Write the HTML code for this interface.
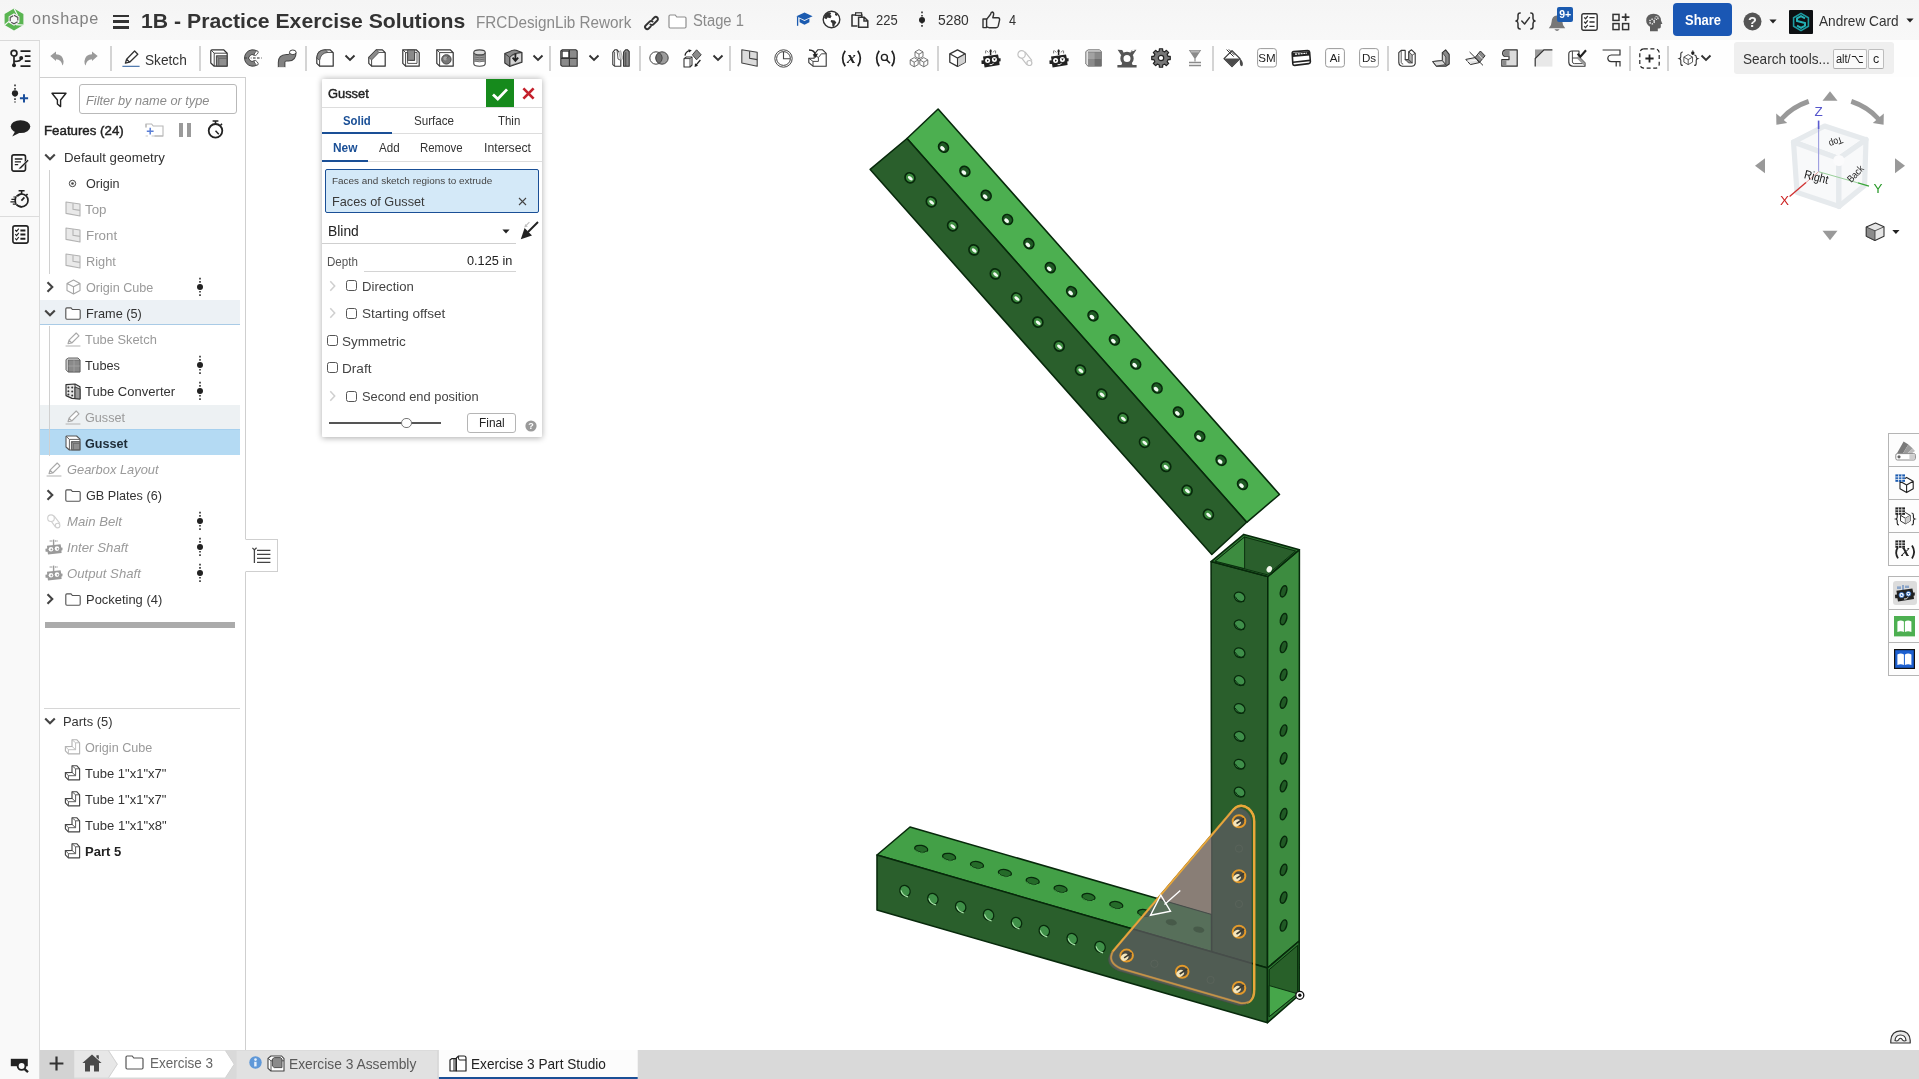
<!DOCTYPE html><html><head><meta charset="utf-8"><title>1B - Practice Exercise Solutions | Exercise 3 Part Studio</title><style>
html,body{margin:0;padding:0}
body{width:1919px;height:1079px;overflow:hidden;background:#fff;font-family:"Liberation Sans", sans-serif;position:relative}
.abs{position:absolute;box-sizing:border-box}
.t{position:absolute;white-space:nowrap;transform-origin:0 0;display:block}
svg{position:absolute;overflow:visible}
.sep{position:absolute;width:2px;background:#d4d4d4;top:46px;height:25px}
.cb{position:absolute;box-sizing:border-box;width:11px;height:11px;border:1px solid #555;border-radius:2.5px;background:#fff}
</style></head><body><div id="app" style="position:absolute;left:0;top:0;width:1919px;height:1079px;will-change:transform">
<svg style="left:0;top:0" width="1919" height="1079" viewBox="0 0 1919 1079"><polygon points="938.1,109.0 1279.5,494.5 1246.7,522.3 907.0,138.5" fill="#4caf50" stroke="#07290b" stroke-width="1.55" stroke-linejoin="round" />
<polygon points="907.0,138.5 1246.7,522.3 1211.8,554.5 870.2,169.4" fill="#2a5f2c" stroke="#07290b" stroke-width="1.55" stroke-linejoin="round" />
<ellipse cx="943.5" cy="147.2" rx="5.3" ry="4.6" transform="rotate(48 943.5 147.2)" fill="#1f5a24" stroke="#07290b" stroke-width="1.7"/>
<ellipse cx="942.5" cy="148.4" rx="2.7" ry="1.8" transform="rotate(40 942.5 148.4)" fill="#f4fbf4" stroke="none" stroke-width="0"/>
<ellipse cx="964.9" cy="171.3" rx="5.3" ry="4.6" transform="rotate(48 964.9 171.3)" fill="#1f5a24" stroke="#07290b" stroke-width="1.7"/>
<ellipse cx="963.9" cy="172.5" rx="2.7" ry="1.8" transform="rotate(40 963.9 172.5)" fill="#f4fbf4" stroke="none" stroke-width="0"/>
<ellipse cx="986.2" cy="195.4" rx="5.3" ry="4.6" transform="rotate(48 986.2 195.4)" fill="#1f5a24" stroke="#07290b" stroke-width="1.7"/>
<ellipse cx="985.2" cy="196.6" rx="2.7" ry="1.8" transform="rotate(40 985.2 196.6)" fill="#f4fbf4" stroke="none" stroke-width="0"/>
<ellipse cx="1007.6" cy="219.5" rx="5.3" ry="4.6" transform="rotate(48 1007.6 219.5)" fill="#1f5a24" stroke="#07290b" stroke-width="1.7"/>
<ellipse cx="1006.6" cy="220.7" rx="2.7" ry="1.8" transform="rotate(40 1006.6 220.7)" fill="#f4fbf4" stroke="none" stroke-width="0"/>
<ellipse cx="1028.9" cy="243.6" rx="5.3" ry="4.6" transform="rotate(48 1028.9 243.6)" fill="#1f5a24" stroke="#07290b" stroke-width="1.7"/>
<ellipse cx="1027.9" cy="244.8" rx="2.7" ry="1.8" transform="rotate(40 1027.9 244.8)" fill="#f4fbf4" stroke="none" stroke-width="0"/>
<ellipse cx="1050.3" cy="267.6" rx="5.3" ry="4.6" transform="rotate(48 1050.3 267.6)" fill="#1f5a24" stroke="#07290b" stroke-width="1.7"/>
<ellipse cx="1049.3" cy="268.8" rx="2.7" ry="1.8" transform="rotate(40 1049.3 268.8)" fill="#f4fbf4" stroke="none" stroke-width="0"/>
<ellipse cx="1071.6" cy="291.7" rx="5.3" ry="4.6" transform="rotate(48 1071.6 291.7)" fill="#1f5a24" stroke="#07290b" stroke-width="1.7"/>
<ellipse cx="1070.6" cy="292.9" rx="2.7" ry="1.8" transform="rotate(40 1070.6 292.9)" fill="#f4fbf4" stroke="none" stroke-width="0"/>
<ellipse cx="1093.0" cy="315.8" rx="5.3" ry="4.6" transform="rotate(48 1093.0 315.8)" fill="#1f5a24" stroke="#07290b" stroke-width="1.7"/>
<ellipse cx="1092.0" cy="317.0" rx="2.7" ry="1.8" transform="rotate(40 1092.0 317.0)" fill="#f4fbf4" stroke="none" stroke-width="0"/>
<ellipse cx="1114.4" cy="339.9" rx="5.3" ry="4.6" transform="rotate(48 1114.4 339.9)" fill="#1f5a24" stroke="#07290b" stroke-width="1.7"/>
<ellipse cx="1113.4" cy="341.1" rx="2.7" ry="1.8" transform="rotate(40 1113.4 341.1)" fill="#f4fbf4" stroke="none" stroke-width="0"/>
<ellipse cx="1135.7" cy="364.0" rx="5.3" ry="4.6" transform="rotate(48 1135.7 364.0)" fill="#1f5a24" stroke="#07290b" stroke-width="1.7"/>
<ellipse cx="1134.7" cy="365.2" rx="2.7" ry="1.8" transform="rotate(40 1134.7 365.2)" fill="#f4fbf4" stroke="none" stroke-width="0"/>
<ellipse cx="1157.1" cy="388.0" rx="5.3" ry="4.6" transform="rotate(48 1157.1 388.0)" fill="#1f5a24" stroke="#07290b" stroke-width="1.7"/>
<ellipse cx="1156.1" cy="389.2" rx="2.7" ry="1.8" transform="rotate(40 1156.1 389.2)" fill="#f4fbf4" stroke="none" stroke-width="0"/>
<ellipse cx="1178.4" cy="412.1" rx="5.3" ry="4.6" transform="rotate(48 1178.4 412.1)" fill="#1f5a24" stroke="#07290b" stroke-width="1.7"/>
<ellipse cx="1177.4" cy="413.3" rx="2.7" ry="1.8" transform="rotate(40 1177.4 413.3)" fill="#f4fbf4" stroke="none" stroke-width="0"/>
<ellipse cx="1199.8" cy="436.2" rx="5.3" ry="4.6" transform="rotate(48 1199.8 436.2)" fill="#1f5a24" stroke="#07290b" stroke-width="1.7"/>
<ellipse cx="1198.8" cy="437.4" rx="2.7" ry="1.8" transform="rotate(40 1198.8 437.4)" fill="#f4fbf4" stroke="none" stroke-width="0"/>
<ellipse cx="1221.1" cy="460.3" rx="5.3" ry="4.6" transform="rotate(48 1221.1 460.3)" fill="#1f5a24" stroke="#07290b" stroke-width="1.7"/>
<ellipse cx="1220.1" cy="461.5" rx="2.7" ry="1.8" transform="rotate(40 1220.1 461.5)" fill="#f4fbf4" stroke="none" stroke-width="0"/>
<ellipse cx="1242.5" cy="484.4" rx="5.3" ry="4.6" transform="rotate(48 1242.5 484.4)" fill="#1f5a24" stroke="#07290b" stroke-width="1.7"/>
<ellipse cx="1241.5" cy="485.6" rx="2.7" ry="1.8" transform="rotate(40 1241.5 485.6)" fill="#f4fbf4" stroke="none" stroke-width="0"/>
<ellipse cx="910.0" cy="177.8" rx="5.2" ry="4.8" transform="rotate(48 910.0 177.8)" fill="#3d8c40" stroke="#07290b" stroke-width="1.7"/>
<ellipse cx="910.3" cy="178.3" rx="2.9" ry="1.5" transform="rotate(38 910.3 178.3)" fill="#f4fbf4" stroke="none" stroke-width="0"/>
<ellipse cx="931.3" cy="201.8" rx="5.2" ry="4.8" transform="rotate(48 931.3 201.8)" fill="#3d8c40" stroke="#07290b" stroke-width="1.7"/>
<ellipse cx="931.6" cy="202.4" rx="2.9" ry="1.5" transform="rotate(38 931.6 202.4)" fill="#f4fbf4" stroke="none" stroke-width="0"/>
<ellipse cx="952.6" cy="225.8" rx="5.2" ry="4.8" transform="rotate(48 952.6 225.8)" fill="#3d8c40" stroke="#07290b" stroke-width="1.7"/>
<ellipse cx="952.9" cy="226.4" rx="2.9" ry="1.5" transform="rotate(38 952.9 226.4)" fill="#f4fbf4" stroke="none" stroke-width="0"/>
<ellipse cx="973.9" cy="249.9" rx="5.2" ry="4.8" transform="rotate(48 973.9 249.9)" fill="#3d8c40" stroke="#07290b" stroke-width="1.7"/>
<ellipse cx="974.2" cy="250.5" rx="2.9" ry="1.5" transform="rotate(38 974.2 250.5)" fill="#f4fbf4" stroke="none" stroke-width="0"/>
<ellipse cx="995.3" cy="273.9" rx="5.2" ry="4.8" transform="rotate(48 995.3 273.9)" fill="#3d8c40" stroke="#07290b" stroke-width="1.7"/>
<ellipse cx="995.6" cy="274.6" rx="2.9" ry="1.5" transform="rotate(38 995.6 274.6)" fill="#f4fbf4" stroke="none" stroke-width="0"/>
<ellipse cx="1016.6" cy="298.0" rx="5.2" ry="4.8" transform="rotate(48 1016.6 298.0)" fill="#3d8c40" stroke="#07290b" stroke-width="1.7"/>
<ellipse cx="1016.9" cy="298.6" rx="2.9" ry="1.5" transform="rotate(38 1016.9 298.6)" fill="#f4fbf4" stroke="none" stroke-width="0"/>
<ellipse cx="1037.9" cy="322.1" rx="5.2" ry="4.8" transform="rotate(48 1037.9 322.1)" fill="#3d8c40" stroke="#07290b" stroke-width="1.7"/>
<ellipse cx="1038.2" cy="322.7" rx="2.9" ry="1.5" transform="rotate(38 1038.2 322.7)" fill="#f4fbf4" stroke="none" stroke-width="0"/>
<ellipse cx="1059.2" cy="346.1" rx="5.2" ry="4.8" transform="rotate(48 1059.2 346.1)" fill="#3d8c40" stroke="#07290b" stroke-width="1.7"/>
<ellipse cx="1059.5" cy="346.7" rx="2.9" ry="1.5" transform="rotate(38 1059.5 346.7)" fill="#f4fbf4" stroke="none" stroke-width="0"/>
<ellipse cx="1080.5" cy="370.1" rx="5.2" ry="4.8" transform="rotate(48 1080.5 370.1)" fill="#3d8c40" stroke="#07290b" stroke-width="1.7"/>
<ellipse cx="1080.8" cy="370.8" rx="2.9" ry="1.5" transform="rotate(38 1080.8 370.8)" fill="#f4fbf4" stroke="none" stroke-width="0"/>
<ellipse cx="1101.8" cy="394.2" rx="5.2" ry="4.8" transform="rotate(48 1101.8 394.2)" fill="#3d8c40" stroke="#07290b" stroke-width="1.7"/>
<ellipse cx="1102.1" cy="394.8" rx="2.9" ry="1.5" transform="rotate(38 1102.1 394.8)" fill="#f4fbf4" stroke="none" stroke-width="0"/>
<ellipse cx="1123.1" cy="418.2" rx="5.2" ry="4.8" transform="rotate(48 1123.1 418.2)" fill="#3d8c40" stroke="#07290b" stroke-width="1.7"/>
<ellipse cx="1123.4" cy="418.9" rx="2.9" ry="1.5" transform="rotate(38 1123.4 418.9)" fill="#f4fbf4" stroke="none" stroke-width="0"/>
<ellipse cx="1144.5" cy="442.3" rx="5.2" ry="4.8" transform="rotate(48 1144.5 442.3)" fill="#3d8c40" stroke="#07290b" stroke-width="1.7"/>
<ellipse cx="1144.8" cy="442.9" rx="2.9" ry="1.5" transform="rotate(38 1144.8 442.9)" fill="#f4fbf4" stroke="none" stroke-width="0"/>
<ellipse cx="1165.8" cy="466.4" rx="5.2" ry="4.8" transform="rotate(48 1165.8 466.4)" fill="#3d8c40" stroke="#07290b" stroke-width="1.7"/>
<ellipse cx="1166.1" cy="467.0" rx="2.9" ry="1.5" transform="rotate(38 1166.1 467.0)" fill="#f4fbf4" stroke="none" stroke-width="0"/>
<ellipse cx="1187.1" cy="490.4" rx="5.2" ry="4.8" transform="rotate(48 1187.1 490.4)" fill="#3d8c40" stroke="#07290b" stroke-width="1.7"/>
<ellipse cx="1187.4" cy="491.0" rx="2.9" ry="1.5" transform="rotate(38 1187.4 491.0)" fill="#f4fbf4" stroke="none" stroke-width="0"/>
<ellipse cx="1208.4" cy="514.5" rx="5.2" ry="4.8" transform="rotate(48 1208.4 514.5)" fill="#3d8c40" stroke="#07290b" stroke-width="1.7"/>
<ellipse cx="1208.7" cy="515.1" rx="2.9" ry="1.5" transform="rotate(38 1208.7 515.1)" fill="#f4fbf4" stroke="none" stroke-width="0"/>
<polygon points="877.0,855.0 910.0,827.0 1211.7,914.3 1211.7,951.8" fill="#43a047" stroke="#07290b" stroke-width="1.55" stroke-linejoin="round" />
<ellipse cx="921.2" cy="848.9" rx="6.6" ry="3.5" transform="rotate(10 921.2 848.9)" fill="#256b29" stroke="#07290b" stroke-width="1.25"/>
<path d="M915.0 849.5 a6.6 3.5 10 0 0 12 2.5" fill="none" stroke="#4caf50" stroke-width="0.9"/>
<ellipse cx="949.1" cy="856.9" rx="6.6" ry="3.5" transform="rotate(10 949.1 856.9)" fill="#256b29" stroke="#07290b" stroke-width="1.25"/>
<path d="M942.9 857.5 a6.6 3.5 10 0 0 12 2.5" fill="none" stroke="#4caf50" stroke-width="0.9"/>
<ellipse cx="977.0" cy="865.0" rx="6.6" ry="3.5" transform="rotate(10 977.0 865.0)" fill="#256b29" stroke="#07290b" stroke-width="1.25"/>
<path d="M970.8 865.6 a6.6 3.5 10 0 0 12 2.5" fill="none" stroke="#4caf50" stroke-width="0.9"/>
<ellipse cx="1004.9" cy="873.0" rx="6.6" ry="3.5" transform="rotate(10 1004.9 873.0)" fill="#256b29" stroke="#07290b" stroke-width="1.25"/>
<path d="M998.7 873.6 a6.6 3.5 10 0 0 12 2.5" fill="none" stroke="#4caf50" stroke-width="0.9"/>
<ellipse cx="1032.7" cy="881.0" rx="6.6" ry="3.5" transform="rotate(10 1032.7 881.0)" fill="#256b29" stroke="#07290b" stroke-width="1.25"/>
<path d="M1026.5 881.6 a6.6 3.5 10 0 0 12 2.5" fill="none" stroke="#4caf50" stroke-width="0.9"/>
<ellipse cx="1060.6" cy="889.0" rx="6.6" ry="3.5" transform="rotate(10 1060.6 889.0)" fill="#256b29" stroke="#07290b" stroke-width="1.25"/>
<path d="M1054.4 889.6 a6.6 3.5 10 0 0 12 2.5" fill="none" stroke="#4caf50" stroke-width="0.9"/>
<ellipse cx="1088.5" cy="897.1" rx="6.6" ry="3.5" transform="rotate(10 1088.5 897.1)" fill="#256b29" stroke="#07290b" stroke-width="1.25"/>
<path d="M1082.3 897.7 a6.6 3.5 10 0 0 12 2.5" fill="none" stroke="#4caf50" stroke-width="0.9"/>
<ellipse cx="1116.3" cy="905.1" rx="6.6" ry="3.5" transform="rotate(10 1116.3 905.1)" fill="#256b29" stroke="#07290b" stroke-width="1.25"/>
<path d="M1110.1 905.7 a6.6 3.5 10 0 0 12 2.5" fill="none" stroke="#4caf50" stroke-width="0.9"/>
<ellipse cx="1144.2" cy="913.1" rx="6.6" ry="3.5" transform="rotate(10 1144.2 913.1)" fill="#256b29" stroke="#07290b" stroke-width="1.25"/>
<path d="M1138.0 913.7 a6.6 3.5 10 0 0 12 2.5" fill="none" stroke="#4caf50" stroke-width="0.9"/>
<polygon points="1211.1,561.6 1267.8,576.5 1267.5,968.0 1211.7,951.8" fill="#2a5f2c" stroke="#07290b" stroke-width="1.55" stroke-linejoin="round" />
<polygon points="877.0,855.0 1267.5,968.0 1267.5,1022.7 877.0,910.0" fill="#2a5f2c" stroke="#07290b" stroke-width="1.55" stroke-linejoin="round" />
<polygon points="1267.8,576.5 1299.4,549.7 1299.2,941.0 1267.5,968.0" fill="#3d8c40" stroke="#07290b" stroke-width="1.55" stroke-linejoin="round" />
<polygon points="1243.8,534.4 1299.4,549.7 1267.8,576.5 1211.1,561.6" fill="#2f7a33" stroke="#07290b" stroke-width="1.55" stroke-linejoin="round" />
<polygon points="1244.6,537.0 1295.6,551.0 1267.4,574.8 1215.2,561.2" fill="#2a5f2c" stroke="#07290b" stroke-width="0.9" stroke-linejoin="round" />
<polygon points="1244.6,537.0 1244.6,568.6 1215.2,561.2" fill="#3d8c40" stroke="#07290b" stroke-width="0.9" stroke-linejoin="round" />
<ellipse cx="1269.3" cy="569.2" rx="2.6" ry="3.3" transform="rotate(25 1269.3 569.2)" fill="#f4f8ee" stroke="none" stroke-width="0"/>
<polygon points="1267.5,968.0 1299.2,941.0 1299.2,995.0 1267.5,1022.7" fill="#2f7a33" stroke="#07290b" stroke-width="1.55" stroke-linejoin="round" />
<polygon points="1269.2,969.6 1297.6,945.4 1297.6,993.8 1269.2,1016.6" fill="#286029" stroke="#07290b" stroke-width="1" stroke-linejoin="round" />
<polygon points="1269.2,985.6 1297.4,993.7 1269.2,1016.6" fill="#46a64a" stroke="#07290b" stroke-width="0.9" stroke-linejoin="round" />
<ellipse cx="1239.6" cy="597.0" rx="5.6" ry="4.6" transform="rotate(32 1239.6 597.0)" fill="#3f8f4a" stroke="#07290b" stroke-width="1.25"/>
<path d="M1235.2 596.5 q3 6 9 5" fill="none" stroke="#07290b" stroke-width="0.9"/>
<ellipse cx="1239.6" cy="624.9" rx="5.6" ry="4.6" transform="rotate(32 1239.6 624.9)" fill="#3f8f4a" stroke="#07290b" stroke-width="1.25"/>
<path d="M1235.2 624.4 q3 6 9 5" fill="none" stroke="#07290b" stroke-width="0.9"/>
<ellipse cx="1239.6" cy="652.7" rx="5.6" ry="4.6" transform="rotate(32 1239.6 652.7)" fill="#3f8f4a" stroke="#07290b" stroke-width="1.25"/>
<path d="M1235.2 652.2 q3 6 9 5" fill="none" stroke="#07290b" stroke-width="0.9"/>
<ellipse cx="1239.6" cy="680.6" rx="5.6" ry="4.6" transform="rotate(32 1239.6 680.6)" fill="#3f8f4a" stroke="#07290b" stroke-width="1.25"/>
<path d="M1235.2 680.1 q3 6 9 5" fill="none" stroke="#07290b" stroke-width="0.9"/>
<ellipse cx="1239.6" cy="708.5" rx="5.6" ry="4.6" transform="rotate(32 1239.6 708.5)" fill="#3f8f4a" stroke="#07290b" stroke-width="1.25"/>
<path d="M1235.2 708.0 q3 6 9 5" fill="none" stroke="#07290b" stroke-width="0.9"/>
<ellipse cx="1239.6" cy="736.4" rx="5.6" ry="4.6" transform="rotate(32 1239.6 736.4)" fill="#3f8f4a" stroke="#07290b" stroke-width="1.25"/>
<path d="M1235.2 735.9 q3 6 9 5" fill="none" stroke="#07290b" stroke-width="0.9"/>
<ellipse cx="1239.6" cy="764.2" rx="5.6" ry="4.6" transform="rotate(32 1239.6 764.2)" fill="#3f8f4a" stroke="#07290b" stroke-width="1.25"/>
<path d="M1235.2 763.7 q3 6 9 5" fill="none" stroke="#07290b" stroke-width="0.9"/>
<ellipse cx="1239.6" cy="792.1" rx="5.6" ry="4.6" transform="rotate(32 1239.6 792.1)" fill="#3f8f4a" stroke="#07290b" stroke-width="1.25"/>
<path d="M1235.2 791.6 q3 6 9 5" fill="none" stroke="#07290b" stroke-width="0.9"/>
<ellipse cx="1283.6" cy="591.3" rx="2.9" ry="5.8" transform="rotate(18 1283.6 591.3)" fill="#215a25" stroke="#07290b" stroke-width="1.5"/>
<ellipse cx="1283.6" cy="619.1" rx="2.9" ry="5.8" transform="rotate(18 1283.6 619.1)" fill="#215a25" stroke="#07290b" stroke-width="1.5"/>
<ellipse cx="1283.6" cy="647.0" rx="2.9" ry="5.8" transform="rotate(18 1283.6 647.0)" fill="#215a25" stroke="#07290b" stroke-width="1.5"/>
<ellipse cx="1283.6" cy="674.8" rx="2.9" ry="5.8" transform="rotate(18 1283.6 674.8)" fill="#215a25" stroke="#07290b" stroke-width="1.5"/>
<ellipse cx="1283.6" cy="702.7" rx="2.9" ry="5.8" transform="rotate(18 1283.6 702.7)" fill="#215a25" stroke="#07290b" stroke-width="1.5"/>
<ellipse cx="1283.6" cy="730.5" rx="2.9" ry="5.8" transform="rotate(18 1283.6 730.5)" fill="#215a25" stroke="#07290b" stroke-width="1.5"/>
<ellipse cx="1283.6" cy="758.4" rx="2.9" ry="5.8" transform="rotate(18 1283.6 758.4)" fill="#215a25" stroke="#07290b" stroke-width="1.5"/>
<ellipse cx="1283.6" cy="786.2" rx="2.9" ry="5.8" transform="rotate(18 1283.6 786.2)" fill="#215a25" stroke="#07290b" stroke-width="1.5"/>
<ellipse cx="1283.6" cy="814.1" rx="2.9" ry="5.8" transform="rotate(18 1283.6 814.1)" fill="#215a25" stroke="#07290b" stroke-width="1.5"/>
<ellipse cx="1283.6" cy="841.9" rx="2.9" ry="5.8" transform="rotate(18 1283.6 841.9)" fill="#215a25" stroke="#07290b" stroke-width="1.5"/>
<ellipse cx="1283.6" cy="869.8" rx="2.9" ry="5.8" transform="rotate(18 1283.6 869.8)" fill="#215a25" stroke="#07290b" stroke-width="1.5"/>
<ellipse cx="1283.6" cy="897.6" rx="2.9" ry="5.8" transform="rotate(18 1283.6 897.6)" fill="#215a25" stroke="#07290b" stroke-width="1.5"/>
<ellipse cx="1283.6" cy="925.5" rx="2.9" ry="5.8" transform="rotate(18 1283.6 925.5)" fill="#215a25" stroke="#07290b" stroke-width="1.5"/>
<ellipse cx="905.0" cy="890.9" rx="5.0" ry="5.7" transform="rotate(-32 905.0 890.9)" fill="#3f9048" stroke="#07290b" stroke-width="1.25"/>
<path d="M901.0 890.3 q1.2 5.2 7.0 6.6" fill="none" stroke="#a9e3a9" stroke-width="1.1"/>
<ellipse cx="932.9" cy="898.9" rx="5.0" ry="5.7" transform="rotate(-32 932.9 898.9)" fill="#3f9048" stroke="#07290b" stroke-width="1.25"/>
<path d="M928.9 898.3 q1.2 5.2 7.0 6.6" fill="none" stroke="#a9e3a9" stroke-width="1.1"/>
<ellipse cx="960.7" cy="906.9" rx="5.0" ry="5.7" transform="rotate(-32 960.7 906.9)" fill="#3f9048" stroke="#07290b" stroke-width="1.25"/>
<path d="M956.7 906.3 q1.2 5.2 7.0 6.6" fill="none" stroke="#a9e3a9" stroke-width="1.1"/>
<ellipse cx="988.6" cy="914.9" rx="5.0" ry="5.7" transform="rotate(-32 988.6 914.9)" fill="#3f9048" stroke="#07290b" stroke-width="1.25"/>
<path d="M984.6 914.3 q1.2 5.2 7.0 6.6" fill="none" stroke="#a9e3a9" stroke-width="1.1"/>
<ellipse cx="1016.5" cy="922.9" rx="5.0" ry="5.7" transform="rotate(-32 1016.5 922.9)" fill="#3f9048" stroke="#07290b" stroke-width="1.25"/>
<path d="M1012.5 922.3 q1.2 5.2 7.0 6.6" fill="none" stroke="#a9e3a9" stroke-width="1.1"/>
<ellipse cx="1044.3" cy="930.9" rx="5.0" ry="5.7" transform="rotate(-32 1044.3 930.9)" fill="#3f9048" stroke="#07290b" stroke-width="1.25"/>
<path d="M1040.3 930.3 q1.2 5.2 7.0 6.6" fill="none" stroke="#a9e3a9" stroke-width="1.1"/>
<ellipse cx="1072.2" cy="938.9" rx="5.0" ry="5.7" transform="rotate(-32 1072.2 938.9)" fill="#3f9048" stroke="#07290b" stroke-width="1.25"/>
<path d="M1068.2 938.3 q1.2 5.2 7.0 6.6" fill="none" stroke="#a9e3a9" stroke-width="1.1"/>
<ellipse cx="1100.1" cy="946.9" rx="5.0" ry="5.7" transform="rotate(-32 1100.1 946.9)" fill="#3f9048" stroke="#07290b" stroke-width="1.25"/>
<path d="M1096.1 946.3 q1.2 5.2 7.0 6.6" fill="none" stroke="#a9e3a9" stroke-width="1.1"/>
<path d="M1112.8 951.5 L1233.5 809.5 Q1240.5 802.5 1248.5 808.5 Q1254.2 813.5 1254.2 821 L1254.2 990 Q1254.2 1004 1241 1003.2 L1121 968.6 Q1107 962.5 1112.8 951.5 Z" fill="none" stroke="#e9a83a" stroke-width="2.4" stroke-linejoin="round"/>
<polygon points="1211.2,836.0 1211.2,913.8 1158.6,898.6" fill="#f2d6a8" stroke="none" stroke-width="0" stroke-linejoin="round" />
<path d="M1112.8 951.5 L1233.5 809.5 Q1240.5 802.5 1248.5 808.5 Q1254.2 813.5 1254.2 821 L1254.2 990 Q1254.2 1004 1241 1003.2 L1121 968.6 Q1107 962.5 1112.8 951.5 Z" transform="translate(-2.6,2.2)" fill="#5f5b62" fill-opacity="0.72" stroke="#4a4a46" stroke-opacity="0.55" stroke-width="1"/>
<path d="M1112.8 951.5 L1233.5 809.5 Q1240.5 802.5 1248.5 808.5 Q1254.2 813.5 1254.2 821 L1254.2 990" fill="none" stroke="#e9a83a" stroke-width="1.8" stroke-linejoin="round"/>
<path d="M1254.2 990 Q1254.2 1004 1241 1003.2 L1121 968.6 Q1107 962.5 1112.8 951.5" fill="none" stroke="#d9a040" stroke-opacity="0.75" stroke-width="1.6" stroke-linejoin="round"/>
<ellipse cx="1171.3" cy="922.3" rx="5.6" ry="3.0" transform="rotate(10 1171.3 922.3)" fill="#2e3a30" fill-opacity="0.38"/>
<ellipse cx="1198.8" cy="929.6" rx="5.6" ry="3.0" transform="rotate(10 1198.8 929.6)" fill="#2e3a30" fill-opacity="0.38"/>
<ellipse cx="1239.0" cy="848.6" rx="3.6" ry="3.6" fill="none" stroke="#6a6f68" stroke-opacity="0.35" stroke-width="1"/>
<ellipse cx="1239.0" cy="904.0" rx="3.6" ry="3.6" fill="none" stroke="#6a6f68" stroke-opacity="0.35" stroke-width="1"/>
<ellipse cx="1154.4" cy="963.8" rx="3.6" ry="3.6" fill="none" stroke="#6a6f68" stroke-opacity="0.35" stroke-width="1"/>
<ellipse cx="1210.6" cy="980.0" rx="3.6" ry="3.6" fill="none" stroke="#6a6f68" stroke-opacity="0.35" stroke-width="1"/>
<ellipse cx="1239.0" cy="821.3" rx="6.3" ry="6.0" transform="rotate(0 1239.0 821.3)" fill="#4a4a40" stroke="#e39a2b" stroke-width="2"/>
<ellipse cx="1237.0" cy="822.9" rx="4.0" ry="3.3" transform="rotate(-35 1237.0 822.9)" fill="#f4e6bd" stroke="none" stroke-width="0"/>
<path d="M1236.5 823.5 l7.5 -5" stroke="#3a3a30" stroke-width="1.6" fill="none"/>
<ellipse cx="1239.0" cy="876.2" rx="6.3" ry="6.0" transform="rotate(0 1239.0 876.2)" fill="#4a4a40" stroke="#e39a2b" stroke-width="2"/>
<ellipse cx="1237.0" cy="877.8" rx="4.0" ry="3.3" transform="rotate(-35 1237.0 877.8)" fill="#f4e6bd" stroke="none" stroke-width="0"/>
<path d="M1236.5 878.4 l7.5 -5" stroke="#3a3a30" stroke-width="1.6" fill="none"/>
<ellipse cx="1239.0" cy="931.8" rx="6.3" ry="6.0" transform="rotate(0 1239.0 931.8)" fill="#4a4a40" stroke="#e39a2b" stroke-width="2"/>
<ellipse cx="1237.0" cy="933.4" rx="4.0" ry="3.3" transform="rotate(-35 1237.0 933.4)" fill="#f4e6bd" stroke="none" stroke-width="0"/>
<path d="M1236.5 934.0 l7.5 -5" stroke="#3a3a30" stroke-width="1.6" fill="none"/>
<ellipse cx="1239.0" cy="988.0" rx="6.3" ry="6.0" transform="rotate(0 1239.0 988.0)" fill="#4a4a40" stroke="#e39a2b" stroke-width="2"/>
<ellipse cx="1237.0" cy="989.6" rx="4.0" ry="3.3" transform="rotate(-35 1237.0 989.6)" fill="#f4e6bd" stroke="none" stroke-width="0"/>
<path d="M1236.5 990.2 l7.5 -5" stroke="#3a3a30" stroke-width="1.6" fill="none"/>
<ellipse cx="1182.2" cy="971.8" rx="6.3" ry="6.0" transform="rotate(0 1182.2 971.8)" fill="#4a4a40" stroke="#e39a2b" stroke-width="2"/>
<ellipse cx="1180.2" cy="973.4" rx="4.0" ry="3.3" transform="rotate(-35 1180.2 973.4)" fill="#f4e6bd" stroke="none" stroke-width="0"/>
<path d="M1179.7 974.0 l7.5 -5" stroke="#3a3a30" stroke-width="1.6" fill="none"/>
<ellipse cx="1126.6" cy="955.6" rx="6.3" ry="6.0" transform="rotate(0 1126.6 955.6)" fill="#4a4a40" stroke="#e39a2b" stroke-width="2"/>
<ellipse cx="1124.6" cy="957.2" rx="4.0" ry="3.3" transform="rotate(-35 1124.6 957.2)" fill="#f4e6bd" stroke="none" stroke-width="0"/>
<path d="M1124.1 957.8 l7.5 -5" stroke="#3a3a30" stroke-width="1.6" fill="none"/>
<path d="M1180.3 890.5 L1164.5 904.5 M1160.8 895.2 L1170.5 911.2 L1150.5 915.2 Z" fill="none" stroke="#fff" stroke-width="1.4" stroke-linejoin="miter"/>
<circle cx="1299.8" cy="995.3" r="4.0" fill="#fff" stroke="#111" stroke-width="1.3"/><circle cx="1299.8" cy="995.3" r="1.7" fill="#111"/></svg>
<svg style="left:1740px;top:80px" width="179" height="180" viewBox="1740 80 179 180"><g fill="#999"><path d="M1822.5 100.8 L1837.5 100.8 L1830 91.3 Z"/><path d="M1822.5 230.8 L1837.5 230.8 L1830 240.3 Z"/><path d="M1765 158.3 L1765 173.3 L1755 165.8 Z"/><path d="M1895 158.3 L1895 173.3 L1905 165.8 Z"/></g><path d="M1808.7 101.4 Q1792 107 1781.5 119" fill="none" stroke="#999" stroke-width="4.8"/><path d="M1776.4 124.8 L1776.2 113.4 L1787.2 122.9 Z" fill="#999"/><path d="M1851.3 101.4 Q1868 107 1878.5 119" fill="none" stroke="#999" stroke-width="4.8"/><path d="M1883.6 124.8 L1883.8 113.4 L1872.8 122.9 Z" fill="#999"/><g stroke="#e6eaed" stroke-width="5.2" stroke-linejoin="round" fill="#f8f9fa"><path d="M1793.5 142 L1824.6 126 L1866 139.6 L1838.9 158.6 Z"/><path d="M1793.5 142 L1838.9 158.6 L1838.9 206.4 L1797 192.4 Z"/><path d="M1838.9 158.6 L1866 139.6 L1864.6 185.4 L1838.9 206.4 Z"/></g><circle cx="1838.9" cy="160.5" r="5.6" fill="#fbfbfc"/><path d="M1818.6 120.6 V129" stroke="#5b5bd0" stroke-width="1.6"/><path d="M1818.6 129 V171.7" stroke="#9c9ce0" stroke-width="1.1"/><path d="M1818.6 171.7 L1858 182.9" stroke="#9ad09a" stroke-width="1"/><path d="M1858 182.9 L1869 186.1" stroke="#3aa63a" stroke-width="1.3"/><path d="M1818.6 171.7 L1806 182.5" stroke="#e8a0a0" stroke-width="1"/><path d="M1806 182.5 L1789.6 196.6" stroke="#d03030" stroke-width="1.3"/><text x="1814.4" y="115.6" font-size="13.5" fill="#5555cc" font-family="Liberation Sans, sans-serif">Z</text><text x="1873.6" y="192.8" font-size="13.5" fill="#2a9a2a" font-family="Liberation Sans, sans-serif">Y</text><text x="1780" y="205.4" font-size="13.5" fill="#cc2222" font-family="Liberation Sans, sans-serif">X</text><text x="0" y="0" font-size="12.2" fill="#111" font-family="Liberation Sans, sans-serif" transform="translate(1803.6 178) rotate(14) scale(0.86 1)">Right</text><text x="0" y="0" font-size="10" fill="#222" font-family="Liberation Sans, sans-serif" transform="translate(1851.2 183) rotate(-46) scale(0.86 1)">Back</text><text x="0" y="0" font-size="9.5" fill="#222" font-family="Liberation Sans, sans-serif" transform="translate(1841.4 136.6) rotate(160) scale(0.92 1)">Top</text><path d="M1866.3 227 L1875.5 223 L1884 226.8 L1884 236.2 L1875 240.5 L1866.3 236.2 Z" fill="#e6e6e6" stroke="#333" stroke-width="1.1" stroke-linejoin="round"/><path d="M1866.3 227 L1875 230.8 L1875 240.5 L1866.3 236.2 Z" fill="#8c8c8c" stroke="#333" stroke-width="0.8"/><path d="M1875 230.8 L1884 226.8" stroke="#333" stroke-width="0.8"/><path d="M1892.3 230 H1899.5 L1895.9 234 Z" fill="#222"/></svg>
<div class="abs" style="left:1888px;top:433px;width:40px;height:133px;background:#fdfdfd;border:1px solid #b5b5b5"></div>
<div class="abs" style="left:1888px;top:466px;width:40px;height:1px;background:#b5b5b5"></div>
<div class="abs" style="left:1888px;top:499px;width:40px;height:1px;background:#b5b5b5"></div>
<div class="abs" style="left:1888px;top:532px;width:40px;height:1px;background:#b5b5b5"></div>
<div class="abs" style="left:1888px;top:576px;width:40px;height:100px;background:#fdfdfd;border:1px solid #b5b5b5"></div>
<div class="abs" style="left:1888px;top:609.2px;width:40px;height:1px;background:#b5b5b5"></div>
<div class="abs" style="left:1888px;top:642.4px;width:40px;height:1px;background:#b5b5b5"></div>
<svg style="left:1894.5px;top:441.0px" width="21" height="20" viewBox="0 0 21 20"><path d="M1 14 L8.6 0.6 L13.4 3.4 L7 14 Z" fill="#7a7a7a"/><path d="M7 14 L13.4 3.4 L17.8 7.4 L10.6 14 Z" fill="#9c9c9c"/><path d="M10.6 14 L17.8 7.4 L20 10 L14.6 14 Z" fill="#bdbdbd"/><rect x="0.8" y="12.6" width="19.6" height="6.4" rx="1.6" fill="#fff" stroke="#8a8a8a" stroke-width="1"/><rect x="14.4" y="13.2" width="5.6" height="5.2" fill="#cfcfcf"/><circle cx="4" cy="15.8" r="1.6" fill="#666"/></svg>
<svg style="left:1894.5px;top:473.6px" width="20" height="20" viewBox="0 0 20 20"><path d="M11.60 3.40 L18.21 7.20 V14.80 L11.60 18.60 L4.99 14.80 V7.20 Z M4.99 7.20 L11.60 11.00 L18.21 7.20 M11.60 11.00 V18.60" fill="#fff" stroke="#222" stroke-width="1.1" stroke-linejoin="round"/><rect x="0.4" y="0.4" width="9.6" height="7.4" fill="#1b5bb0"/><path d="M3.6 0.4 V7.8 M6.8 0.4 V7.8 M0.4 2.9 H10 M0.4 5.4 H10" stroke="#fff" stroke-width="0.8"/></svg>
<svg style="left:1894.5px;top:506.5px" width="20" height="19" viewBox="0 0 20 19"><path d="M10.40 5.60 L15.27 8.40 V14.00 L10.40 16.80 L5.53 14.00 V8.40 Z M5.53 8.40 L10.40 11.20 L15.27 8.40 M10.40 11.20 V16.80" fill="#fff" stroke="#333" stroke-width="1" stroke-linejoin="round"/><path d="M10.4 11.2 V16.8 L15.2 14 V8.4 Z" fill="#cfcfcf"/><path d="M4 6 Q2.2 6 2.2 8 V10.2 Q2.2 11.6 0.8 12 Q2.2 12.4 2.2 13.8 V16 Q2.2 18 4 18 M16.6 6 Q18.4 6 18.4 8 V10.2 Q18.4 11.6 19.8 12 Q18.4 12.4 18.4 13.8 V16 Q18.4 18 16.6 18" fill="none" stroke="#222" stroke-width="1.1"/><rect x="0.4" y="0.4" width="9.6" height="7.4" fill="#222"/><path d="M3.6 0.4 V7.8 M6.8 0.4 V7.8 M0.4 2.9 H10 M0.4 5.4 H10" stroke="#fff" stroke-width="0.8"/></svg>
<svg style="left:1894.5px;top:539.5px" width="20" height="19" viewBox="0 0 20 19"><path d="M3 7 Q-0.6 12.5 3 18.4 M17 5.6 Q21.2 12 17 18.4" fill="none" stroke="#222" stroke-width="1.8"/><text x="10.6" y="16" font-size="17" font-style="italic" font-weight="700" text-anchor="middle" fill="#222" font-family="Liberation Serif, serif">x</text><rect x="0.4" y="0.4" width="9.6" height="7.4" fill="#222"/><path d="M3.6 0.4 V7.8 M6.8 0.4 V7.8 M0.4 2.9 H10 M0.4 5.4 H10" stroke="#fff" stroke-width="0.8"/></svg>
<svg style="left:1892.8px;top:580.6px" width="24" height="24" viewBox="0 0 24 24"><rect width="24" height="24" rx="3" fill="#dcdcdc"/><path d="M5 5.4 V8 M7 5.4 V8 M15 4.6 V7 M13 4.6 V7 M10 4 V9" stroke="#3a6fb5" stroke-width="1"/><path d="M3.4 9.8 L19.4 7.6 L20.2 11.4 L21.8 11.4 L21.8 14.4 L20.6 14.8 L21 18 L5 20.4 L4.4 17.2 L2.2 17.2 L2 13.8 L4 13.4 Z" fill="#222"/><circle cx="8.6" cy="14" r="2.6" fill="#fff" stroke="#2d6cc4" stroke-width="0.8"/><circle cx="15.4" cy="12.8" r="2.4" fill="#fff" stroke="#2d6cc4" stroke-width="0.8"/><path d="M7.8 12.8 L10 14.2 L7.8 15.2 Z" fill="#2d6cc4"/><path d="M14.2 12 H16.8 L15.4 14 Z" fill="#2d6cc4"/><path d="M11 18 Q14 18.6 15 16.2" fill="none" stroke="#fff" stroke-width="0.9"/></svg>
<svg style="left:1894.3px;top:615.8px" width="21" height="20.4" viewBox="0 0 21 20.4"><rect width="21" height="20.4" fill="#4caf50"/><path d="M3.4 5.6 Q6.8 3.6 9.9 5.6 V16 Q6.8 14.6 3.4 16 Z M17.4 5.6 Q14 3.6 10.9 5.6 V16 Q14 14.6 17.4 16 Z" fill="#fff"/></svg>
<svg style="left:1894.3px;top:648.8px" width="21" height="20" viewBox="0 0 21 20"><rect x="0.6" y="0.6" width="19.8" height="18.8" fill="#1c5fd0" stroke="#111" stroke-width="1.2"/><path d="M3.4 5.6 Q6.8 3.6 9.9 5.6 V16 Q6.8 14.6 3.4 16 Z M17.4 5.6 Q14 3.6 10.9 5.6 V16 Q14 14.6 17.4 16 Z" fill="#fff"/></svg>
<svg style="left:1889.5px;top:1029.5px" width="21" height="14" viewBox="0 0 21 14"><path d="M0.8 13 V10.4 Q1.4 1 10.5 0.8 Q19.6 1 20.2 10.4 V13 Z" fill="#e9e9e9" stroke="#333" stroke-width="1.2" stroke-linejoin="round"/><path d="M5 10.6 Q5.4 5 10.5 5 Q15.6 5 16 10.6 Q14.2 11.6 12.6 10.2 Q11.8 8.2 10.5 8.2 Q9.2 8.2 8.4 10.2 Q6.8 11.6 5 10.6 Z" fill="#fff" stroke="#333" stroke-width="1.1"/></svg>
<div class="abs" style="left:0px;top:0px;width:1919px;height:40px;background:linear-gradient(#f5f5f5,#f8f8f8)"></div>
<svg style="left:4.4px;top:8.2px" width="20" height="23" viewBox="0 0 20 23"><path fill-rule="evenodd" fill="#5ab552" d="M10 0.6 L19.4 6 V17 L10 22.4 L0.6 17 V6 Z M10 5.2 L4.6 8.4 V14.6 L10 17.8 L15.4 14.6 V8.4 Z"/><path d="M10 0.4 L13.6 7.4 M0.4 17.2 L5 13.4 M19.6 17.2 L12 16.6" stroke="#f6f6f6" stroke-width="1.2"/><path d="M10 7.2 L13.8 9.4 V13.6 L10 15.8 L6.2 13.6 V9.4 Z" fill="none" stroke="#555" stroke-width="1.2" stroke-dasharray="7.4 1.4"/></svg>
<span class="t" style="left:31.8px;top:10.3px;font-size:17.4px;line-height:17.4px;color:#808080;transform:scaleX(0.9338);letter-spacing:0.7px;">onshape</span>
<div class="abs" style="left:113px;top:14.5px;width:16.2px;height:2.5px;background:#333"></div>
<div class="abs" style="left:113px;top:20.3px;width:16.2px;height:2.5px;background:#333"></div>
<div class="abs" style="left:113px;top:26.2px;width:16.2px;height:2.5px;background:#333"></div>
<span class="t" style="left:141.3px;top:10.7px;font-size:20.6px;line-height:20.6px;color:#333;font-weight:700;transform:scaleX(1.0303);">1B - Practice Exercise Solutions</span>
<span class="t" style="left:475.5px;top:14.7px;font-size:16px;line-height:16px;color:#8a8a8a;transform:scaleX(0.9544);">FRCDesignLib Rework</span>
<svg style="left:644.2px;top:14.7px" width="15" height="15" viewBox="0 0 15 15"><g fill="none" stroke="#333" stroke-width="1.9" stroke-linecap="round"><path d="M6.2 8.8 L4.1 10.9 A2.1 2.1 0 0 1 1.1 7.9 L5.0 4.0 A2.1 2.1 0 0 1 8.0 4.0" transform="translate(0.6 2.6)"/><path d="M7.6 5.0 L9.7 2.9 A2.1 2.1 0 0 1 12.7 5.9 L8.8 9.8 A2.1 2.1 0 0 1 5.8 9.8" transform="translate(0.6 -0.4)"/></g></svg>
<svg style="left:668.3px;top:14.3px" width="19" height="15" viewBox="0 0 19 15"><path d="M1 2.2 Q1 1 2.2 1 H7.2 L8.8 3 H16.8 Q18 3 18 4.2 V12.8 Q18 14 16.8 14 H2.2 Q1 14 1 12.8 Z" fill="#fff" stroke="#8e8e8e" stroke-width="1.2"/></svg>
<span class="t" style="left:692.8px;top:12.8px;font-size:16px;line-height:16px;color:#8a8a8a;transform:scaleX(0.9228);">Stage 1</span>
<svg style="left:796.2px;top:12.1px" width="17" height="15" viewBox="0 0 17 15"><path d="M8.5 0.5 L16.6 4.2 L8.5 8 L0.4 4.2 Z" fill="#1b5bb0"/><path d="M3.6 6.6 V10.2 L8.5 12.8 L13.4 10.2 V6.6 L8.5 9 Z" fill="#1b5bb0"/><path d="M1.6 4.8 V13.8" stroke="#1b5bb0" stroke-width="1.3"/></svg>
<svg style="left:821.5px;top:10.3px" width="19" height="19" viewBox="0 0 19 19"><circle cx="9.5" cy="9.5" r="8.3" fill="#fff" stroke="#333" stroke-width="1.4"/><path d="M5.2 2.6 Q8 1.8 9.2 3.4 L8.2 4.8 L9.6 6 L8.4 8.2 L5.6 7.6 L4.4 9.2 L2 8 Q2.4 4.6 5.2 2.6 Z" fill="#333"/><path d="M9.2 10 L12.6 10.6 L14.4 12.6 L12.8 14.4 L12 17 L10.4 16.2 L10.2 13.2 L8.6 11.6 Z" fill="#333"/><path d="M13 3 L15.6 4.6 L14.6 6 L13 5 Z" fill="#333"/></svg>
<svg style="left:850.5px;top:11.8px" width="18" height="16" viewBox="0 0 18 16"><path d="M1 3 H5.5 M10 3 H10.8 V5" fill="none" stroke="#333" stroke-width="1.5"/><path d="M1 2.4 V14 H6.5" fill="none" stroke="#333" stroke-width="1.6"/><rect x="4.6" y="0.8" width="6" height="2.6" fill="#f5f5f5" stroke="#333" stroke-width="1.2"/><path d="M7.6 5.2 H13.2 L16.8 8.8 V15.2 H7.6 Z M13 5.4 V9 H16.6" fill="none" stroke="#333" stroke-width="1.5" stroke-linejoin="miter"/></svg>
<span class="t" style="left:875.8px;top:11.8px;font-size:15px;line-height:15px;color:#333;transform:scaleX(0.8669);">225</span>
<svg style="left:918.2px;top:11.0px" width="8" height="18" viewBox="0 0 8 18"><path d="M4 0.5 V17.5" stroke="#222" stroke-width="1.5" stroke-dasharray="1.7 1.7"/><circle cx="4" cy="9" r="3" fill="#222"/></svg>
<span class="t" style="left:937.5px;top:11.8px;font-size:15px;line-height:15px;color:#333;transform:scaleX(0.9228);">5280</span>
<svg style="left:982.3px;top:10.5px" width="19" height="18" viewBox="0 0 19 18"><path d="M1 8 H4.6 V16.6 H1 Z" fill="none" stroke="#333" stroke-width="1.4" stroke-linejoin="round"/><path d="M4.6 8.4 L8.6 3.2 Q9 0.9 10.4 1 Q12 1.4 11.6 3.8 L10.8 6.8 H16 Q17.8 7 17.6 8.8 L16.2 15.2 Q15.8 16.8 14 16.8 H7.6 L4.6 15.8" fill="none" stroke="#333" stroke-width="1.4" stroke-linejoin="round"/></svg>
<span class="t" style="left:1008.7px;top:11.8px;font-size:15px;line-height:15px;color:#333;transform:scaleX(0.8509);">4</span>
<svg style="left:1514.5px;top:12.3px" width="21" height="18" viewBox="0 0 21 18"><g fill="none" stroke="#333" stroke-width="1.5" stroke-linecap="round" stroke-linejoin="round"><path d="M5.2 1 Q3 1 3 3.2 V6.6 Q3 8.6 1 9 Q3 9.4 3 11.4 V14.8 Q3 17 5.2 17"/><path d="M15.8 1 Q18 1 18 3.2 V6.6 Q18 8.6 20 9 Q18 9.4 18 11.4 V14.8 Q18 17 15.8 17"/><path d="M6.8 9 L9.6 12 L14.4 5.6"/></g></svg>
<svg style="left:1548.0px;top:14.5px" width="18" height="17" viewBox="0 0 18 17"><path d="M9 0.6 Q14.2 1 14.4 6.8 Q14.4 10.8 17.2 13.2 H0.8 Q3.6 10.8 3.6 6.8 Q3.8 1 9 0.6 Z" fill="#777"/><path d="M6.4 14.2 Q9 17.8 11.6 14.2 Z" fill="#777"/></svg>
<div class="abs" style="left:1557.2px;top:6.5px;width:15.5px;height:15.3px;background:#1b5bb0;border-radius:2px"></div>
<span class="t" style="left:1559.2px;top:9.3px;font-size:10.5px;line-height:10.5px;color:#fff;font-weight:700;">9+</span>
<svg style="left:1580.5px;top:13.0px" width="17" height="18" viewBox="0 0 17 18"><rect x="0.8" y="0.8" width="15.4" height="16.4" rx="1.6" fill="#fff" stroke="#333" stroke-width="1.4"/><g stroke="#333" stroke-width="1.3" fill="none"><path d="M8.4 4.6 H13.6 M8.4 9 H13.6 M8.4 13.4 H13.6"/><path d="M3.2 4.4 L4.6 5.8 L6.8 3"/><path d="M3.2 8.8 L4.6 10.2 L6.8 7.4"/><path d="M3.2 13.2 L4.6 14.6 L6.8 11.8"/></g></svg>
<svg style="left:1611.5px;top:13.0px" width="19" height="18" viewBox="0 0 19 18"><g fill="none" stroke="#333" stroke-width="1.5"><rect x="1" y="1.4" width="6" height="6"/><rect x="1" y="10.6" width="6" height="6"/><rect x="10.6" y="10.6" width="6" height="6"/><path d="M13.6 0.4 V8 M9.8 4.2 H17.4" stroke-width="1.7"/></g></svg>
<svg style="left:1644.5px;top:12.7px" width="18" height="19" viewBox="0 0 18 19"><path d="M8.6 0.8 Q15.6 0.8 16 7.6 L17.4 11 H15.8 V14 Q15.8 15.4 14.2 15.4 H12.8 V18.2 H5 V13.8 Q1.2 11.6 1.2 7.6 Q1.4 1 8.6 0.8 Z" fill="#5e5e5e"/><circle cx="7" cy="8.6" r="2.3" fill="none" stroke="#f5f5f5" stroke-width="1.4" stroke-dasharray="1.3 1"/><circle cx="11.6" cy="5" r="1.5" fill="none" stroke="#f5f5f5" stroke-width="1.1" stroke-dasharray="1 0.8"/></svg>
<div class="abs" style="left:1673.1px;top:3.3px;width:58.8px;height:32.3px;background:#1a57b4;border-radius:4px"></div>
<span class="t" style="left:1684.5px;top:12.4px;font-size:15.5px;line-height:15.5px;color:#fff;font-weight:700;transform:scaleX(0.8354);">Share</span>
<svg style="left:1742.5px;top:12.1px" width="19" height="19" viewBox="0 0 19 19"><circle cx="9.5" cy="9.5" r="9" fill="#555"/><text x="9.5" y="14.6" font-size="14.5" font-weight="700" fill="#f5f5f5" text-anchor="middle" font-family="Liberation Sans, sans-serif">?</text></svg>
<svg style="left:1769.0px;top:18.9px" width="8" height="5" viewBox="0 0 8 5"><path d="M0.4 0.6 H7.6 L4 4.4 Z" fill="#222"/></svg>
<svg style="left:1788.9px;top:9.8px" width="24" height="24" viewBox="0 0 24 24"><rect width="24" height="24" fill="#0d0f12" rx="1"/><path d="M12 3.4 L19.4 7.7 V16.3 L12 20.6 L4.6 16.3 V7.7 Z" fill="none" stroke="#1d9aa0" stroke-width="1.6"/><path d="M16 8.4 L12 6.2 L8 8.4 V11 L16 13 V15.6 L12 17.8 L8 15.6" fill="none" stroke="#23b0b6" stroke-width="2"/></svg>
<span class="t" style="left:1818.8px;top:12.8px;font-size:15px;line-height:15px;color:#333;transform:scaleX(0.9104);">Andrew Card</span>
<svg style="left:1905.6px;top:17.7px" width="8" height="5" viewBox="0 0 8 5"><path d="M0.4 0.6 H7.6 L4 4.4 Z" fill="#222"/></svg>
<div class="abs" style="left:40px;top:40px;width:1879px;height:37px;background:#fefefe"></div>
<div class="sep" style="left:109.9px"></div>
<div class="sep" style="left:198.8px"></div>
<div class="sep" style="left:304.9px"></div>
<div class="sep" style="left:549px"></div>
<div class="sep" style="left:639px"></div>
<div class="sep" style="left:729px"></div>
<div class="sep" style="left:936.6px"></div>
<div class="sep" style="left:1212.4px"></div>
<div class="sep" style="left:1387px"></div>
<div class="sep" style="left:1629px"></div>
<div class="sep" style="left:1667px"></div>
<svg style="left:50.0px;top:50.5px" width="14" height="15" viewBox="0 0 14 15"><path d="M0.3 5 L6 0.4 V3.2 Q12.8 3.4 13.6 10.2 Q13.6 13 12.4 14.6 Q11.6 8.6 6 8.2 V10 Z" fill="#9a9a9a"/></svg>
<svg style="left:84.0px;top:50.5px" width="14" height="15" viewBox="0 0 14 15"><path d="M13.7 5 L8 0.4 V3.2 Q1.2 3.4 0.4 10.2 Q0.4 13 1.6 14.6 Q2.4 8.6 8 8.2 V10 Z" fill="#9a9a9a"/></svg>
<svg style="left:122.0px;top:49.5px" width="18" height="17" viewBox="0 0 18 17"><path d="M3.4 13.2 L4.6 9.2 L12.6 1 L15.8 4.2 L7.6 12.2 Z M4.6 9.2 L7.6 12.2" fill="#fff" stroke="#333" stroke-width="1.3" stroke-linejoin="round"/><path d="M0.4 16.3 H17.6" stroke="#2e5f9e" stroke-width="1.05"/></svg>
<svg style="left:210.0px;top:49.0px" width="18" height="18" viewBox="0 0 18 18"><path d="M0.8 2 Q0.8 0.8 2 0.8 H13.6 L17.2 4.2 V17.2 H4.2 L0.8 14 Z" fill="#fff" stroke="#333" stroke-width="1.2" stroke-linejoin="round"/><path d="M1.2 1.2 L4.2 4.2 H17 M4.2 4.2 V17" fill="none" stroke="#333" stroke-width="0.9"/><path d="M6.4 6.8 H17 V17 H6.4 Z" fill="#8f8f8f" stroke="#444" stroke-width="1"/><path d="M6.4 6.8 L8.8 9.2 H17 M8.8 9.2 V17" fill="none" stroke="#5a5a5a" stroke-width="0.9"/></svg>
<svg style="left:244.0px;top:49.0px" width="18" height="18" viewBox="0 0 18 18"><path d="M13.6 2.4 A8.2 8.2 0 1 0 13.6 15.6 L10.4 11.6 A3.4 3.4 0 1 1 10.4 6.4 Z" fill="#808080" stroke="#444" stroke-width="1"/><ellipse cx="12.2" cy="4.2" rx="1.4" ry="2.7" transform="rotate(38 12.2 4.2)" fill="#fff" stroke="#444" stroke-width="0.8"/><ellipse cx="12.2" cy="13.8" rx="1.4" ry="2.7" transform="rotate(-38 12.2 13.8)" fill="#fff" stroke="#444" stroke-width="0.8"/><path d="M0.6 9 H5.6" stroke="#333" stroke-width="0.9" stroke-dasharray="2.4 1.2"/><path d="M5 9 H17.6" stroke="#222" stroke-width="1" stroke-dasharray="2.6 1.4"/><path d="M5.2 9 L8 7.4 M5.2 9 L8 10.6" stroke="#fff" stroke-width="1"/></svg>
<svg style="left:277.0px;top:48.5px" width="20" height="19" viewBox="0 0 20 19"><path d="M4.6 18.4 V13.4 Q4.6 9 9.4 8.8 H11.4 Q15.8 8.6 15.8 3.4" fill="none" stroke="#444" stroke-width="7.6"/><path d="M4.6 18.6 V13.4 Q4.6 9 9.4 8.8 H11.4 Q15.8 8.6 15.8 3.2" fill="none" stroke="#828282" stroke-width="5.6"/><ellipse cx="15.8" cy="3.3" rx="3.3" ry="2.3" fill="#fff" stroke="#444" stroke-width="1"/><path d="M0.6 18.9 H8.6" stroke="#fdfdfd" stroke-width="1.4"/></svg>
<svg style="left:316.0px;top:49.0px" width="18" height="18" viewBox="0 0 18 18"><path d="M0.8 9 Q1.2 1 9.2 0.8 H14 L17.2 3.6 V17.2 H3.6 L0.8 14.4 Z" fill="#fff" stroke="#333" stroke-width="1.2" stroke-linejoin="round"/><path d="M0.8 9 Q1.2 1 9.2 0.8 L12 3.4 Q4.6 3.8 3.6 11.6 Z" fill="#8a8a8a" stroke="#444" stroke-width="0.8"/><path d="M3.6 11.6 V17.2 M12 3.4 H17" fill="none" stroke="#333" stroke-width="0.9"/></svg>
<svg style="left:344.0px;top:54.0px" width="12" height="8" viewBox="0 0 12 8"><path d="M1.5 1.5 L6 6 L10.5 1.5" fill="none" stroke="#333" stroke-width="1.9"/></svg>
<svg style="left:368.0px;top:49.0px" width="18" height="18" viewBox="0 0 18 18"><path d="M0.8 8.4 L8.2 0.8 H14.4 L17.2 3.6 V17.2 H3.6 L0.8 14.4 Z" fill="#fff" stroke="#333" stroke-width="1.2" stroke-linejoin="round"/><path d="M0.8 8.4 L8.2 0.8 L11 3.4 L3.6 11 Z" fill="#8a8a8a" stroke="#444" stroke-width="0.8"/><path d="M3.6 11 V17.2 M11 3.4 H17" fill="none" stroke="#333" stroke-width="0.9"/></svg>
<svg style="left:402.0px;top:49.0px" width="18" height="18" viewBox="0 0 18 18"><path d="M0.8 0.8 H14.2 L17.2 3.6 V17.2 H3.6 L0.8 14.4 Z" fill="#fff" stroke="#333" stroke-width="1.2" stroke-linejoin="round"/><path d="M0.8 0.8 L3.6 3.6 V17.2 M3.6 3.6 H5.6" fill="none" stroke="#333" stroke-width="0.9"/><path d="M5.6 1 H12.6 V11.4 H5.6 Z" fill="#8a8a8a" stroke="#444" stroke-width="0.8"/><path d="M5.6 3.4 V14.4 H15 V3.4 H12.6 V11.4 H7.6" fill="none" stroke="#444" stroke-width="0.9"/></svg>
<svg style="left:436.0px;top:49.0px" width="18" height="18" viewBox="0 0 18 18"><path d="M0.8 0.8 H14.2 L17.2 3.6 V17.2 H3.6 L0.8 14.4 Z" fill="#fff" stroke="#333" stroke-width="1.2" stroke-linejoin="round"/><path d="M0.8 0.8 L3.6 3.6 V17.2 M3.6 3.6 H17.2" fill="none" stroke="#333" stroke-width="0.9"/><circle cx="10.4" cy="10.4" r="4.7" fill="#777" stroke="#444" stroke-width="1"/><circle cx="9.4" cy="9.4" r="2" fill="#a5a5a5"/><path d="M10.4 10.4 L13 6.6" stroke="#555" stroke-width="0.8"/></svg>
<svg style="left:472.5px;top:49.0px" width="13" height="18" viewBox="0 0 13 18"><path d="M0.8 3.4 V14.8 Q0.8 17.2 6.5 17.2 Q12.2 17.2 12.2 14.8 V3.4" fill="#fff" stroke="#444" stroke-width="1.1"/><path d="M1 4.4 H12 V12.6 H1 Z" fill="#9a9a9a"/><path d="M1 6 Q6.5 7.6 12 6 M1 8 Q6.5 9.6 12 8 M1 10 Q6.5 11.6 12 10 M1 12 Q6.5 13.6 12 12" fill="none" stroke="#6a6a6a" stroke-width="0.9"/><ellipse cx="6.5" cy="3.4" rx="5.7" ry="2.5" fill="#d8d8d8" stroke="#444" stroke-width="1.1"/></svg>
<svg style="left:503.5px;top:49.0px" width="19" height="18" viewBox="0 0 19 18"><path d="M0.8 4.6 L6 2.4 Q9 0.4 12.2 1.2 L18 3.4 V13.2 L5.6 17.4 L0.8 14 Z" fill="#8a8a8a" stroke="#333" stroke-width="1.1" stroke-linejoin="round"/><path d="M0.8 4.6 L5.6 8.2 V17.4 M5.6 8.2 Q9 4 18 3.4" fill="none" stroke="#333" stroke-width="0.9"/><path d="M6.8 8.6 Q10 5.4 17 4.6 V12.6 L6.8 15.8 Z" fill="#d5d5d5"/><path d="M11.4 4.6 V11 M8.6 8.6 L11.4 11.8 L14.2 8.6" fill="none" stroke="#222" stroke-width="1.8"/></svg>
<svg style="left:532.0px;top:54.0px" width="12" height="8" viewBox="0 0 12 8"><path d="M1.5 1.5 L6 6 L10.5 1.5" fill="none" stroke="#333" stroke-width="1.9"/></svg>
<svg style="left:560.0px;top:49.0px" width="18" height="18" viewBox="0 0 18 18"><path d="M0.8 2 L2.4 0.8 H16 L17.2 2 V17.2 H2 L0.8 16 Z" fill="#8a8a8a" stroke="#333" stroke-width="1.1" stroke-linejoin="round"/><rect x="2.2" y="2.2" width="6.6" height="6.6" fill="#fff" stroke="#333" stroke-width="0.9"/><path d="M9.4 1 V17 M1 9.4 H17" stroke="#333" stroke-width="1.1"/></svg>
<svg style="left:588.0px;top:54.0px" width="12" height="8" viewBox="0 0 12 8"><path d="M1.5 1.5 L6 6 L10.5 1.5" fill="none" stroke="#333" stroke-width="1.9"/></svg>
<svg style="left:612.0px;top:49.0px" width="18" height="18" viewBox="0 0 18 18"><path d="M0.8 3.4 L2.8 0.8 H5 L8.8 5 V17.2 H2.6 L0.8 15.6 Z" fill="#fff" stroke="#333" stroke-width="1.1" stroke-linejoin="round"/><path d="M2.6 3 V17 M5 0.8 L6 10 L8.8 11.4" fill="none" stroke="#333" stroke-width="0.8"/><path d="M6.6 3 L8.6 1.6 L11 9.6 L8.8 11.4 Z" fill="#cfcfcf" stroke="#999" stroke-width="0.6"/><path d="M11.6 3 L13.6 0.8 H15.6 L17.2 2.6 V17.2 H11.6 Z" fill="#8a8a8a" stroke="#333" stroke-width="1.1" stroke-linejoin="round"/><path d="M13.8 3.2 V17" stroke="#333" stroke-width="0.8"/></svg>
<svg style="left:649.0px;top:51.0px" width="20" height="14" viewBox="0 0 20 14"><circle cx="7" cy="7" r="6.2" fill="#fff" stroke="#444" stroke-width="1"/><circle cx="13" cy="7" r="6.2" fill="#8a8a8a" fill-opacity="0.85" stroke="#444" stroke-width="1"/><path d="M10 1.6 A6.2 6.2 0 0 1 10 12.4 A6.2 6.2 0 0 1 10 1.6 Z" fill="#6e6e6e" stroke="#444" stroke-width="0.8"/></svg>
<svg style="left:682.5px;top:48.5px" width="19" height="19" viewBox="0 0 19 19"><path d="M13.6 0.8 L18.2 5.8 L13.6 10.8 L9.4 5.8 Z" fill="#8a8a8a" stroke="#444" stroke-width="1"/><path d="M1 9.6 L3.4 8 H9 V16 L7 18 H1 Z" fill="#fff" stroke="#333" stroke-width="1.1" stroke-linejoin="round"/><path d="M1 9.6 H7 V18 M7 9.6 L9 8" fill="none" stroke="#333" stroke-width="0.9"/><path d="M2 6.6 Q2.6 2.6 6.6 1.6" fill="none" stroke="#222" stroke-width="1.3"/><path d="M5.4 0.2 L8.8 1.2 L6.2 3.6 Z" fill="#222"/><path d="M17.4 11 L12.8 16.4" fill="none" stroke="#222" stroke-width="1.3"/><path d="M11.6 18 L12 14.2 L15 16.8 Z" fill="#222"/></svg>
<svg style="left:712.0px;top:54.0px" width="12" height="8" viewBox="0 0 12 8"><path d="M1.5 1.5 L6 6 L10.5 1.5" fill="none" stroke="#333" stroke-width="1.9"/></svg>
<svg style="left:740.5px;top:49.0px" width="17" height="18" viewBox="0 0 17 18"><path d="M0.8 0.8 L16.2 3.2 V17.2 L0.8 14 Z" fill="#dcdcdc" stroke="#444" stroke-width="1.1" stroke-linejoin="round"/><path d="M8.6 2.2 V9.2 L16.2 10.6" fill="none" stroke="#444" stroke-width="1.1"/></svg>
<svg style="left:773.5px;top:48.5px" width="19" height="19" viewBox="0 0 19 19"><circle cx="9.5" cy="9.5" r="8.7" fill="#fff" stroke="#444" stroke-width="1"/><circle cx="9.5" cy="9.5" r="6.9" fill="#fff" stroke="#444" stroke-width="1"/><path d="M9.5 2.8 V9.8 H16.2" fill="none" stroke="#444" stroke-width="1.1"/></svg>
<svg style="left:807.5px;top:49.0px" width="19" height="18" viewBox="0 0 19 18"><path d="M6.2 5.4 L9.8 0.8 H14.6 L18.2 4.4 V17.2 H5 L0.8 13.6 V9.2 H6.2 Z" fill="#fff" stroke="#333" stroke-width="1.1" stroke-linejoin="round"/><path d="M0.8 9.2 L5 12.4 V17.2 M5 12.4 H10.4 V8.6 L13.4 4.8 H18 M10.4 8.6 L6.2 5.4" fill="none" stroke="#333" stroke-width="0.9"/><path d="M1 1 Q7 1 7.4 6.6" fill="none" stroke="#222" stroke-width="1.3"/><path d="M4.6 5.4 L7.8 9 L10 4.6 Z" fill="#222"/></svg>
<svg style="left:840.5px;top:49.5px" width="21" height="17" viewBox="0 0 21 17"><path d="M4.2 0.8 Q-1 8.5 4.2 16.2 M16.8 0.8 Q22 8.5 16.8 16.2" fill="none" stroke="#222" stroke-width="1.7"/><text x="10.4" y="13.4" font-size="17.5" font-style="italic" font-weight="700" text-anchor="middle" fill="#222" font-family="Liberation Serif, serif">x</text></svg>
<svg style="left:874.5px;top:49.5px" width="21" height="17" viewBox="0 0 21 17"><path d="M4.2 0.8 Q-1 8.5 4.2 16.2 M16.8 0.8 Q22 8.5 16.8 16.2" fill="none" stroke="#222" stroke-width="1.7"/><circle cx="9.4" cy="7.4" r="3" fill="none" stroke="#222" stroke-width="1.4"/><path d="M11.4 9.6 L15 13.2" stroke="#222" stroke-width="1.6"/></svg>
<svg style="left:909.0px;top:48.5px" width="20" height="19" viewBox="0 0 20 19"><path d="M10.00 0.60 L14.00 2.90 V7.50 L10.00 9.80 L6.00 7.50 V2.90 Z M6.00 2.90 L10.00 5.20 L14.00 2.90 M10.00 5.20 V9.80 M5.20 8.60 L9.20 10.90 V15.50 L5.20 17.80 L1.20 15.50 V10.90 Z M1.20 10.90 L5.20 13.20 L9.20 10.90 M5.20 13.20 V17.80 M14.80 8.60 L18.80 10.90 V15.50 L14.80 17.80 L10.80 15.50 V10.90 Z M10.80 10.90 L14.80 13.20 L18.80 10.90 M14.80 13.20 V17.80" fill="#fff" stroke="#666" stroke-width="0.9" stroke-linejoin="round"/></svg>
<svg style="left:948.5px;top:49.0px" width="17" height="18" viewBox="0 0 17 18"><path d="M8.5 0.8 L16.2 4.8 V13.2 L8.5 17.4 L0.8 13.2 V4.8 Z" fill="#fff" stroke="#333" stroke-width="1.3" stroke-linejoin="round"/><path d="M8.5 9 V17.2 L16 13.2 V5 Z" fill="#d2d2d2"/><path d="M0.8 4.8 L8.5 9 L16.2 4.8 M8.5 9 V17.4" fill="none" stroke="#333" stroke-width="1.1"/></svg>
<svg style="left:981.0px;top:48.5px" width="20" height="19" viewBox="0 0 20 19"><path d="M9.6 0.6 V6" stroke="#222" stroke-width="1.5"/><path d="M8 2.4 L9.6 0.4 L11.2 2.4" fill="#222"/><path d="M4.6 1.6 V4.4 M5.4 1.6 L7.4 3.4 M14.6 1.6 V4.4 M13.8 1.6 L11.8 3.4" stroke="#555" stroke-width="0.8"/><path d="M2 7.6 L17 5.4 L17.8 9.2 L19.6 9.2 L19.6 12.2 L18.2 12.6 L18.6 16 L3.6 18.4 L3 15 L0.6 15 L0.4 11.6 L2.6 11.2 Z" fill="#222"/><circle cx="6.6" cy="11.6" r="2.5" fill="#fff"/><circle cx="13.4" cy="10.6" r="2.5" fill="#fff"/><path d="M6 10.4 L8 11.8 L6 12.8 Z" fill="#222"/><path d="M12.2 9.6 H14.8 L13.4 11.8 Z" fill="#222"/><path d="M8.6 15.6 Q11.6 16.4 12.6 13.8" fill="none" stroke="#fff" stroke-width="0.9"/></svg>
<svg style="left:1017.0px;top:49.5px" width="16" height="17" viewBox="0 0 16 17"><g fill="#fff" stroke="#c2c2c2" stroke-width="1.2"><path d="M1.6 4.2 L10 14.8 M8 1.8 L15 10.6"/><circle cx="4.6" cy="4.4" r="3.7"/><circle cx="12.4" cy="13" r="2.5"/></g></svg>
<svg style="left:1049.0px;top:48.5px" width="20" height="19" viewBox="0 0 20 19"><path d="M9.6 0.6 V6" stroke="#222" stroke-width="1.5"/><path d="M8 2.4 L9.6 0.4 L11.2 2.4" fill="#222"/><path d="M4.6 1.6 V4.4 M5.4 1.6 L7.4 3.4 M14.6 1.6 V4.4 M13.8 1.6 L11.8 3.4" stroke="#555" stroke-width="0.8"/><path d="M2 7.6 L17 5.4 L17.8 9.2 L19.6 9.2 L19.6 12.2 L18.2 12.6 L18.6 16 L3.6 18.4 L3 15 L0.6 15 L0.4 11.6 L2.6 11.2 Z" fill="#222"/><circle cx="6.6" cy="11.6" r="2.5" fill="#fff"/><circle cx="13.4" cy="10.6" r="2.5" fill="#fff"/><path d="M6 10.4 L8 11.8 L6 12.8 Z" fill="#222"/><path d="M12.2 9.6 H14.8 L13.4 11.8 Z" fill="#222"/><path d="M8.6 15.6 Q11.6 16.4 12.6 13.8" fill="none" stroke="#fff" stroke-width="0.9"/></svg>
<svg style="left:1084.5px;top:49.0px" width="17" height="18" viewBox="0 0 17 18"><path d="M0.8 2.6 L3.2 0.8 H14.6 L16.4 2.6 V17.2 H3 L0.8 15 Z" fill="#e2e2e2" stroke="#777" stroke-width="1" stroke-linejoin="round"/><rect x="3" y="3" width="13.2" height="14" fill="#8a8a8a"/><rect x="3" y="3" width="6.6" height="7" fill="#a2a2a2"/><rect x="9.6" y="10" width="6.6" height="7" fill="#6e6e6e"/><path d="M3 3 H16.2" stroke="#777" stroke-width="0.8"/></svg>
<svg style="left:1117.0px;top:48.5px" width="20" height="19" viewBox="0 0 20 19"><circle cx="10" cy="9.4" r="5.1" fill="none" stroke="#555" stroke-width="3.2"/><path d="M0.6 0.8 L5.2 1 L7.2 4.4 L4.4 6.4 Z M19.4 0.8 L14.8 1 L12.8 4.4 L15.6 6.4 Z" fill="#555"/><path d="M13.6 2.4 L16.6 0.2 L17.8 1.8 Z" fill="#fdfdfd"/><path d="M0.4 18.6 V16 H4.4 L5.4 13.4 H14.6 L15.6 16 H19.6 V18.6 Z" fill="#555"/></svg>
<svg style="left:1151.0px;top:48.0px" width="20" height="20" viewBox="0 0 20 20"><path d="M8.38 0.74 L11.62 0.74 L11.68 3.00 L13.76 3.86 L15.41 2.31 L17.69 4.59 L16.14 6.24 L17.00 8.32 L19.26 8.38 L19.26 11.62 L17.00 11.68 L16.14 13.76 L17.69 15.41 L15.41 17.69 L13.76 16.14 L11.68 17.00 L11.62 19.26 L8.38 19.26 L8.32 17.00 L6.24 16.14 L4.59 17.69 L2.31 15.41 L3.86 13.76 L3.00 11.68 L0.74 11.62 L0.74 8.38 L3.00 8.32 L3.86 6.24 L2.31 4.59 L4.59 2.31 L6.24 3.86 L8.32 3.00 Z" fill="#777" stroke="#222" stroke-width="1.2" stroke-linejoin="round"/><circle cx="10" cy="10" r="2.7" fill="#fff" stroke="#222" stroke-width="1.2"/></svg>
<svg style="left:1188.0px;top:49.0px" width="14" height="18" viewBox="0 0 14 18"><path d="M0.8 1 H13.2 L7.6 9.6 V12.4 H6.4 V9.6 Z" fill="#8a8a8a"/><path d="M2 1.4 H12 L10.6 3.4 H3.4 Z" fill="#b5b5b5"/><path d="M1 13.6 H13 M1 16.4 H13" stroke="#8a8a8a" stroke-width="1.5"/></svg>
<svg style="left:1222.5px;top:48.5px" width="21" height="19" viewBox="0 0 21 19"><path d="M1 9.6 L9 1.6 L17 9.6 L9 17.6 Z" fill="#fff" stroke="#333" stroke-width="1.2" stroke-linejoin="round"/><path d="M1 9.6 H17 L9 17.6 Z" fill="#4a4a4a"/><path d="M3.6 0.6 L10.6 7.6 M5.8 0.4 L11.6 6.2" stroke="#333" stroke-width="1"/><path d="M17 9.6 Q20.4 12.8 19.8 16 Q19 18 17.6 16.8 Q16.4 15 17 9.6 Z" fill="#4a4a4a"/></svg>
<svg style="left:1257.0px;top:48.2px" width="20" height="19.6" viewBox="0 0 20 19.6"><rect x="0.6" y="0.6" width="18.8" height="18.4" rx="2.6" fill="#fff" stroke="#9a9a9a" stroke-width="1"/><text x="10" y="14.2" font-size="11.6" text-anchor="middle" fill="#222" font-family="Liberation Sans, sans-serif">SM</text></svg>
<svg style="left:1291.0px;top:50.0px" width="20" height="16" viewBox="0 0 20 16"><path d="M1.2 3.4 Q1 1.8 2.6 1.6 L16.6 0.6 Q18.4 0.6 18.6 2.2 L19.4 11.8 Q19.4 13.4 17.8 13.6 L3.6 15.4 Q2 15.4 1.8 13.8 Z" fill="#fff" stroke="#222" stroke-width="1.6"/><path d="M1.4 3 L18.6 1.6 L19 5.4 L1.6 7 Z" fill="#222"/><path d="M4 4.2 L16 3.2" stroke="#fff" stroke-width="1.2" stroke-dasharray="2 0.8"/><path d="M2 12.2 L19.2 10.4" stroke="#222" stroke-width="1.6"/></svg>
<svg style="left:1325.0px;top:48.2px" width="20" height="19.6" viewBox="0 0 20 19.6"><rect x="0.6" y="0.6" width="18.8" height="18.4" rx="2.6" fill="#fff" stroke="#9a9a9a" stroke-width="1"/><text x="10" y="14.2" font-size="11.6" text-anchor="middle" fill="#222" font-family="Liberation Sans, sans-serif">Ai</text></svg>
<svg style="left:1359.0px;top:48.2px" width="20" height="19.6" viewBox="0 0 20 19.6"><rect x="0.6" y="0.6" width="18.8" height="18.4" rx="2.6" fill="#fff" stroke="#9a9a9a" stroke-width="1"/><text x="10" y="14.2" font-size="11.6" text-anchor="middle" fill="#222" font-family="Liberation Sans, sans-serif">Ds</text></svg>
<svg style="left:1398.0px;top:49.0px" width="18" height="18" viewBox="0 0 18 18"><path d="M0.8 3.6 L3.2 1.4 H7.2 V10.6 H10.8 V2.8 L13.6 0.8 L17.2 4.4 V14.6 Q16.6 17.2 13.6 17.2 H4.2 Q1 16.8 0.8 13.4 Z" fill="#fff" stroke="#333" stroke-width="1.1" stroke-linejoin="round"/><path d="M10.8 2.8 L14.2 6 V14.2 L10.8 10.6 Z" fill="#b5b5b5" stroke="#333" stroke-width="0.8"/><path d="M7.2 10.6 L10.6 14 H14.2 L10.8 10.6 Z" fill="#8a8a8a" stroke="#333" stroke-width="0.7"/><path d="M3.2 1.4 V13.4 Q3.6 15 5.2 15.2 M14.2 6 L17.2 4.4" fill="none" stroke="#333" stroke-width="0.8"/></svg>
<svg style="left:1432.0px;top:49.0px" width="18" height="18" viewBox="0 0 18 18"><path d="M10.4 3.6 L13.6 0.8 L17.2 5.4 V15 L13.8 17.2 H4.4 L0.8 12.6 L10.4 11.6 Z" fill="#8a8a8a" stroke="#333" stroke-width="1.1" stroke-linejoin="round"/><path d="M0.8 12.6 L10.4 11.6 L13.8 15.6 L4.4 17 Z" fill="#dcdcdc" stroke="#333" stroke-width="0.8"/><path d="M10.4 3.6 L13.8 8 V15.6 L10.4 11.6 Z" fill="#cfcfcf" stroke="#333" stroke-width="0.8"/></svg>
<svg style="left:1464.5px;top:50.0px" width="21" height="16" viewBox="0 0 21 16"><path d="M0.8 9.4 L10 7.6 L14.4 12.6 L5.4 14.6 Z" fill="#e2e2e2" stroke="#333" stroke-width="1" stroke-linejoin="round"/><path d="M10 7.6 L15.4 1 L20 5.8 L14.4 12.6 Z" fill="#8a8a8a" stroke="#333" stroke-width="1" stroke-linejoin="round"/><path d="M13.4 4.4 L17.4 8.8 M2.4 11.4 L12.2 10" stroke="#fff" stroke-width="0.8"/><path d="M4.6 2 L18 15.4" stroke="#333" stroke-width="1"/></svg>
<svg style="left:1500.5px;top:49.0px" width="17" height="18" viewBox="0 0 17 18"><path d="M5 0.8 H16.2 V17.2 H0.8 V10.6 H8 V7.4 H4.4 Q1.6 7 1.6 4.2 Q1.8 1 5 0.8 Z" fill="#dcdcdc" stroke="#333" stroke-width="1.2" stroke-linejoin="round"/><path d="M5 1.4 H8.6 V7.4 H4.4 Q2.2 7 2.2 4.2 Q2.4 1.6 5 1.4 Z M1.4 11.2 H5.4 V16.6 H1.4 Z" fill="#8a8a8a"/></svg>
<svg style="left:1533.5px;top:49.0px" width="19" height="18" viewBox="0 0 19 18"><path d="M1 17.6 V0.6 H18.4 V17.6 Z" fill="#e8e8e8"/><path d="M1 0.6 H10 L1 9.6 Z" fill="#9a9a9a"/><path d="M18.4 0.8 H10 L1.2 9.6 V17.6" fill="none" stroke="#333" stroke-width="1.2"/></svg>
<svg style="left:1567.5px;top:49.0px" width="19" height="18" viewBox="0 0 19 18"><path d="M0.8 5 Q0.8 2 4 2 H11 V8 L17 14 V17.2 H5 Q1 17 0.8 13.4 Z" fill="#fff" stroke="#333" stroke-width="1.1" stroke-linejoin="round"/><path d="M4.4 2.2 V13 Q4.6 14.6 6.4 14.6 H17 M4.4 9 H10" fill="none" stroke="#333" stroke-width="0.9"/><path d="M9.4 8 L16.6 15.2" stroke="#9a9a9a" stroke-width="2.6"/><path d="M9.6 4.8 L12.4 7.6 L18 1.2" fill="none" stroke="#222" stroke-width="2.2"/></svg>
<svg style="left:1601.5px;top:49.0px" width="19" height="18" viewBox="0 0 19 18"><path d="M0.6 1 H18 V6 H9.4 Q5.8 6.4 5.8 9.4 Q6 12.4 9.4 12.6 H18 V17.6 M14.2 12.6 V17.6" fill="none" stroke="#333" stroke-width="1.2"/></svg>
<svg style="left:1638.5px;top:47.5px" width="21" height="21" viewBox="0 0 21 21"><rect x="0.8" y="0.8" width="19.4" height="19.4" rx="4" fill="none" stroke="#222" stroke-width="1.2" stroke-dasharray="4 2.6"/><path d="M10.5 6.4 V14.6 M6.4 10.5 H14.6" stroke="#222" stroke-width="1.8"/></svg>
<svg style="left:1678.5px;top:49.5px" width="19" height="17" viewBox="0 0 19 17"><path d="M3.8 2 Q1.8 2 1.8 4 V6.8 Q1.8 8.2 0.4 8.6 Q1.8 9 1.8 10.4 V13.4 Q1.8 15.4 3.8 15.4 M15.2 5 Q17.2 5 17.2 6.4 V7 Q17.2 8.2 18.6 8.6 Q17.2 9 17.2 10.4 V13.4 Q17.2 15.4 15.2 15.4" fill="none" stroke="#333" stroke-width="1.1"/><path d="M9.20 4.60 L13.55 7.10 V12.10 L9.20 14.60 L4.85 12.10 V7.10 Z M4.85 7.10 L9.20 9.60 L13.55 7.10 M9.20 9.60 V14.60" fill="#fff" stroke="#444" stroke-width="0.9" stroke-linejoin="round"/><path d="M13.8 0.4 V5.6" stroke="#222" stroke-width="1" stroke-dasharray="1 0.8"/><circle cx="13.8" cy="3" r="1.7" fill="#222"/></svg>
<svg style="left:1700.0px;top:54.0px" width="12" height="8" viewBox="0 0 12 8"><path d="M1.5 1.5 L6 6 L10.5 1.5" fill="none" stroke="#333" stroke-width="1.9"/></svg>
<span class="t" style="left:144.6px;top:52.1px;font-size:15px;line-height:15px;color:#333;transform:scaleX(0.9115);">Sketch</span>
<div class="abs" style="left:1734px;top:42px;width:160px;height:32px;background:#efefef;border-radius:3px"></div>
<span class="t" style="left:1742.6px;top:50.5px;font-size:15px;line-height:15px;color:#333;transform:scaleX(0.9052);">Search tools...</span>
<div class="abs" style="left:1833px;top:49px;width:33.5px;height:19.5px;background:#fafafa;border:1px solid #bdbdbd;border-bottom:1.6px solid #a8a8a8;border-radius:2px"></div>
<span class="t" style="left:1836.0px;top:53.2px;font-size:12px;line-height:12px;color:#222;transform:scaleX(0.9162);">alt/⌥</span>
<div class="abs" style="left:1867.5px;top:49px;width:16.5px;height:19.5px;background:#fafafa;border:1px solid #bdbdbd;border-bottom:1.6px solid #a8a8a8;border-radius:2px"></div>
<span class="t" style="left:1872.6px;top:52.6px;font-size:12.5px;line-height:12.5px;color:#222;transform:scaleX(0.9920);">c</span>
<div class="abs" style="left:0px;top:40px;width:40px;height:1039px;background:#f9f9f9;border-right:1px solid #dcdcdc"></div>
<div class="abs" style="left:0px;top:40px;width:40px;height:2px;border-top:1px solid #d9d9d9;"></div>
<svg style="left:9.5px;top:48.9px" width="21" height="19" viewBox="0 0 21 19"><g stroke="#222" fill="none" stroke-width="1.7"><circle cx="4" cy="4.2" r="2.9" fill="#fdfdfd"/><path d="M4 7.2 V15.5 M4 12.4 Q10.6 12.6 11 9.6"/><path d="M10.5 2.2 H20.5 M14.8 7.2 H20.5 M14.8 12.2 H20.5 M10.5 17.2 H20.5" stroke-width="1.8"/></g><circle cx="4" cy="16.2" r="2" fill="#222"/><circle cx="11.2" cy="9" r="2" fill="#222"/></svg>
<svg style="left:11.0px;top:83.5px" width="18" height="19" viewBox="0 0 18 19"><path d="M4 0.6 V18.4" stroke="#222" stroke-width="1.5" stroke-dasharray="1.7 1.7"/><circle cx="4" cy="9.3" r="3.1" fill="#222"/><path d="M13 10.2 V18.4 M8.9 14.3 H17.1" stroke="#1b4f9c" stroke-width="2"/></svg>
<svg style="left:9.9px;top:120.0px" width="21" height="17" viewBox="0 0 21 17"><ellipse cx="10.5" cy="6.6" rx="9.8" ry="6.4" fill="#222"/><path d="M5.6 10.6 L2.2 16.4 L10.2 12.4 Z" fill="#222"/></svg>
<svg style="left:11.0px;top:154.3px" width="18" height="18" viewBox="0 0 18 18"><rect x="0.9" y="0.9" width="13.6" height="16.2" rx="2" fill="#fdfdfd" stroke="#222" stroke-width="1.6"/><path d="M3.8 5 H11.4 M3.8 7.8 H10 M3.8 10.6 H7.2" stroke="#222" stroke-width="1.3"/><path d="M16.6 5.4 L8.4 13.6 L7.4 15.2 L9.8 14.8 L17.8 6.8 Z" fill="#222" stroke="#fdfdfd" stroke-width="0.5"/></svg>
<svg style="left:10.0px;top:188.5px" width="19" height="19" viewBox="0 0 19 19"><circle cx="11.6" cy="11.4" r="6.4" fill="none" stroke="#222" stroke-width="1.7"/><path d="M11.6 5 V2.4 M8.6 1.7 H14.6 M16.2 6.4 L17.6 5" stroke="#222" stroke-width="1.6" fill="none"/><path d="M11.4 11.6 L14.4 8.4" stroke="#222" stroke-width="1.7"/><path d="M3.4 8 H7 M1.4 10.4 H5.8 M0.4 12.8 H5.6 M2.8 15.2 H6.6" stroke="#222" stroke-width="1.2"/><path d="M6.6 6.8 h2.6 v9.6 h-2.6z" fill="#f6f6f6" stroke="none"/><path d="M7.2 7.4 A6.4 6.4 0 0 1 11.6 5" fill="none" stroke="#222" stroke-width="1.7"/><path d="M6.6 15.6 A6.4 6.4 0 0 0 11.6 17.8" fill="none" stroke="#222" stroke-width="1.7"/></svg>
<div class="abs" style="left:0px;top:216px;width:39px;height:1px;background:#dcdcdc"></div>
<svg style="left:11.5px;top:224.5px" width="17" height="19" viewBox="0 0 17 19"><rect x="0.9" y="0.9" width="15.2" height="17.2" rx="2" fill="#fdfdfd" stroke="#222" stroke-width="1.6"/><g stroke="#222" fill="none"><path d="M8.4 5.4 H13.4 M8.4 9.6 H13.4 M8.4 13.8 H13.4" stroke-width="2"/><path d="M3.2 5 L4.6 6.4 L6.8 3.6 M3.2 9.2 L4.6 10.6 L6.8 7.8 M3.2 13.4 L4.6 14.8 L6.8 12" stroke-width="1.1"/></g></svg>
<svg style="left:10.1px;top:1057.7px" width="19" height="15" viewBox="0 0 19 15"><path d="M0.8 0.8 H17.8 V8.2 H0.8 Z" fill="#222"/><circle cx="11.6" cy="8" r="3.9" fill="#f9f9f9" stroke="#222" stroke-width="1.9"/><path d="M14.4 10.8 L18 14.2" stroke="#222" stroke-width="2.3"/></svg>
<div class="abs" style="left:40px;top:77px;width:206px;height:974px;background:#fff;border:1px solid #cfcfcf;border-left:none"></div>
<svg style="left:50.5px;top:92.3px" width="16" height="16" viewBox="0 0 16 16"><path d="M1 1.2 H15 L9.6 8 V14.6 L6.4 12 V8 Z" fill="#fff" stroke="#222" stroke-width="1.4" stroke-linejoin="round"/></svg>
<div class="abs" style="left:79.3px;top:84.3px;width:157.5px;height:29.3px;border:1px solid #b9b9b9;border-radius:3px;background:#fff"></div>
<span class="t" style="left:85.9px;top:94.3px;font-size:13px;line-height:13px;color:#8a8a8a;font-style:italic;transform:scaleX(0.9816);">Filter by name or type</span>
<span class="t" style="left:44.4px;top:124.0px;font-size:13.6px;line-height:13.6px;color:#222;transform:scaleX(0.9766);-webkit-text-stroke:0.45px #222;">Features (24)</span>
<svg style="left:145.3px;top:123.0px" width="19" height="14" viewBox="0 0 19 14"><path d="M1 1 H6.6 L8.2 3 H18 V13 H1 Z" fill="#fff" stroke="#b8b8b8" stroke-width="1.1"/><rect x="0" y="4.4" width="9.4" height="10" fill="#fff"/><path d="M1 1 V4.4 M9.4 13 H18" stroke="#b8b8b8" stroke-width="1.1"/><path d="M5.2 4.8 V11.6 M1.8 8.2 H8.6" stroke="#5b7fd6" stroke-width="1.5"/><path d="M0.6 13 H3 M6.6 13 H9.4" stroke="#c9c9c9" stroke-width="1"/></svg>
<div class="abs" style="left:179px;top:123.3px;width:4.3px;height:13.4px;background:#9a9a9a"></div>
<div class="abs" style="left:186.5px;top:123.3px;width:4.3px;height:13.4px;background:#9a9a9a"></div>
<svg style="left:206.5px;top:120.3px" width="17" height="19" viewBox="0 0 17 19"><circle cx="8.5" cy="10.8" r="6.8" fill="#fff" stroke="#222" stroke-width="1.8"/><path d="M8.5 4 V1.6 M5.6 1 H11.4 M13.6 5.2 L15 3.8" stroke="#222" stroke-width="1.6" fill="none"/><path d="M8.5 10.8 L11.8 14.2" stroke="#222" stroke-width="1.5"/></svg>
<div class="abs" style="left:40px;top:300px;width:200px;height:25.2px;background:#ecf1f5;border-bottom:1px solid #a9cbe6"></div>
<div class="abs" style="left:40px;top:405px;width:200px;height:25px;background:#edf1f3;border-bottom:1px solid #a6d0ee"></div>
<div class="abs" style="left:40px;top:430px;width:200px;height:25px;background:#b4daf3"></div>
<div class="abs" style="left:49.2px;top:170px;width:1px;height:104px;background:#d0d0d0"></div>
<div class="abs" style="left:49.2px;top:326px;width:1px;height:130px;background:#d0d0d0"></div>
<span class="t" style="left:63.6px;top:150.8px;font-size:13.6px;line-height:13.6px;color:#333;transform:scaleX(0.9738);">Default geometry</span>
<svg style="left:44.0px;top:153.0px" width="12" height="8" viewBox="0 0 12 8"><path d="M1.2 1.5 L6 6.3 L10.8 1.5" fill="none" stroke="#444" stroke-width="2.1"/></svg>
<span class="t" style="left:85.6px;top:176.8px;font-size:13.6px;line-height:13.6px;color:#333;transform:scaleX(0.9265);">Origin</span>
<svg style="left:67.9px;top:178.5px" width="9" height="9" viewBox="0 0 9 9"><circle cx="4.5" cy="4.5" r="3.2" fill="#fff" stroke="#444" stroke-width="1"/><circle cx="4.5" cy="4.5" r="1.3" fill="#444"/></svg>
<span class="t" style="left:85.2px;top:202.8px;font-size:13.6px;line-height:13.6px;color:#9a9a9a;transform:scaleX(0.9808);">Top</span>
<svg style="left:64.8px;top:201.0px" width="16" height="16" viewBox="0 0 16 16"><path d="M1 1 L15 3 V15 L1 12.4 Z" fill="#e9e9e9" stroke="#b3b3b3" stroke-width="1.1" stroke-linejoin="round"/><path d="M8 2.2 V8.2 L15 9.4" fill="none" stroke="#b3b3b3" stroke-width="1.1"/></svg>
<span class="t" style="left:85.6px;top:228.8px;font-size:13.6px;line-height:13.6px;color:#9a9a9a;transform:scaleX(0.9800);">Front</span>
<svg style="left:64.8px;top:227.0px" width="16" height="16" viewBox="0 0 16 16"><path d="M1 1 L15 3 V15 L1 12.4 Z" fill="#e9e9e9" stroke="#b3b3b3" stroke-width="1.1" stroke-linejoin="round"/><path d="M8 2.2 V8.2 L15 9.4" fill="none" stroke="#b3b3b3" stroke-width="1.1"/></svg>
<span class="t" style="left:85.6px;top:254.8px;font-size:13.6px;line-height:13.6px;color:#9a9a9a;transform:scaleX(0.9390);">Right</span>
<svg style="left:64.8px;top:253.0px" width="16" height="16" viewBox="0 0 16 16"><path d="M1 1 L15 3 V15 L1 12.4 Z" fill="#e9e9e9" stroke="#b3b3b3" stroke-width="1.1" stroke-linejoin="round"/><path d="M8 2.2 V8.2 L15 9.4" fill="none" stroke="#b3b3b3" stroke-width="1.1"/></svg>
<span class="t" style="left:86.4px;top:280.8px;font-size:13.6px;line-height:13.6px;color:#9a9a9a;transform:scaleX(0.9291);">Origin Cube</span>
<svg style="left:65.5px;top:279.0px" width="15" height="16" viewBox="0 0 15 16"><path d="M7.5 1 L14 4.4 V11.6 L7.5 15 L1 11.6 V4.4 Z M1 4.4 L7.5 7.8 L14 4.4 M7.5 7.8 V15" fill="#fff" stroke="#a6a6a6" stroke-width="1.1" stroke-linejoin="round"/></svg>
<svg style="left:46.0px;top:281.0px" width="8" height="12" viewBox="0 0 8 12"><path d="M1.5 1.2 L6.3 6 L1.5 10.8" fill="none" stroke="#444" stroke-width="2.1"/></svg>
<svg style="left:196.0px;top:276.5px" width="8" height="20" viewBox="0 0 8 20"><path d="M4 0.8 V19.2" stroke="#222" stroke-width="1.5" stroke-dasharray="1.6 1.7"/><circle cx="4" cy="10" r="3" fill="#222"/></svg>
<span class="t" style="left:86.4px;top:306.8px;font-size:13.6px;line-height:13.6px;color:#333;transform:scaleX(0.9351);">Frame (5)</span>
<svg style="left:65.0px;top:306.5px" width="16" height="13" viewBox="0 0 16 13"><path d="M0.8 1.9 Q0.8 0.8 1.9 0.8 H6 L7.4 2.5 H14.1 Q15.2 2.5 15.2 3.6 V11.1 Q15.2 12.2 14.1 12.2 H1.9 Q0.8 12.2 0.8 11.1 Z" fill="#fff" stroke="#555" stroke-width="1.15"/></svg>
<svg style="left:44.0px;top:309.0px" width="12" height="8" viewBox="0 0 12 8"><path d="M1.2 1.5 L6 6.3 L10.8 1.5" fill="none" stroke="#444" stroke-width="2.1"/></svg>
<span class="t" style="left:85.4px;top:332.8px;font-size:13.6px;line-height:13.6px;color:#9a9a9a;transform:scaleX(0.9469);">Tube Sketch</span>
<svg style="left:65.0px;top:331.5px" width="16" height="15" viewBox="0 0 16 15"><path d="M3 11.6 L4 8.2 L11.2 1 L14 3.8 L6.8 11 Z M4 8.2 L6.8 11" fill="#fff" stroke="#a8a8a8" stroke-width="1.1" stroke-linejoin="round"/><path d="M0.6 14 H15.4" stroke="#b8b8b8" stroke-width="1.1"/></svg>
<span class="t" style="left:85.4px;top:358.8px;font-size:13.6px;line-height:13.6px;color:#333;transform:scaleX(0.9388);">Tubes</span>
<svg style="left:64.6px;top:357.0px" width="16" height="16" viewBox="0 0 16 16"><path d="M1 2.6 L3.4 1 H13 L15 3 V15 H3.2 L1 12.8 Z" fill="#c9c9c9" stroke="#666" stroke-width="1" stroke-linejoin="round"/><rect x="3.4" y="3.2" width="11.4" height="11.6" fill="#8a8a8a" stroke="#666" stroke-width="0.8"/><path d="M3.4 9 H14.8 M9 3.2 V14.8" stroke="#a5a5a5" stroke-width="0.8"/></svg>
<svg style="left:196.0px;top:354.5px" width="8" height="20" viewBox="0 0 8 20"><path d="M4 0.8 V19.2" stroke="#222" stroke-width="1.5" stroke-dasharray="1.6 1.7"/><circle cx="4" cy="10" r="3" fill="#222"/></svg>
<span class="t" style="left:85.4px;top:384.8px;font-size:13.6px;line-height:13.6px;color:#333;transform:scaleX(0.9590);">Tube Converter</span>
<svg style="left:64.6px;top:382.5px" width="16" height="17" viewBox="0 0 16 17"><path d="M1 1.6 L10 1 L15 3.8 V16 L7 15.4 L1 12.6 Z" fill="#e8e8e8" stroke="#333" stroke-width="1.2" stroke-linejoin="round"/><path d="M10 1 V15.6" stroke="#333" stroke-width="1"/><path d="M10 4 L15 6 V16 L10 15.6 Z" fill="#9a9a9a" stroke="#333" stroke-width="0.9"/><g fill="#333"><circle cx="3.4" cy="4.6" r="1"/><circle cx="7.2" cy="4.6" r="1"/><circle cx="3.4" cy="8.2" r="1"/><circle cx="7.2" cy="8.6" r="1"/><circle cx="3.4" cy="11.6" r="1"/><circle cx="7.2" cy="12.4" r="1"/></g></svg>
<svg style="left:196.0px;top:380.5px" width="8" height="20" viewBox="0 0 8 20"><path d="M4 0.8 V19.2" stroke="#222" stroke-width="1.5" stroke-dasharray="1.6 1.7"/><circle cx="4" cy="10" r="3" fill="#222"/></svg>
<span class="t" style="left:85.4px;top:410.8px;font-size:13.6px;line-height:13.6px;color:#9a9a9a;transform:scaleX(0.9285);">Gusset</span>
<svg style="left:65.0px;top:409.5px" width="16" height="15" viewBox="0 0 16 15"><path d="M3 11.6 L4 8.2 L11.2 1 L14 3.8 L6.8 11 Z M4 8.2 L6.8 11" fill="#fff" stroke="#a8a8a8" stroke-width="1.1" stroke-linejoin="round"/><path d="M0.6 14 H15.4" stroke="#b8b8b8" stroke-width="1.1"/></svg>
<span class="t" style="left:85.4px;top:436.8px;font-size:13.6px;line-height:13.6px;color:#1d2b36;font-weight:700;transform:scaleX(0.9264);">Gusset</span>
<svg style="left:64.6px;top:435.0px" width="16" height="16" viewBox="0 0 16 16"><path d="M1 1.6 Q1 1 2 1 H11.6 L15 4.2 V15 H4.4 L1 12 Z" fill="#fff" stroke="#555" stroke-width="1.1" stroke-linejoin="round"/><path d="M1 1.2 L4.4 4.4 H15 M4.4 4.4 V15" fill="none" stroke="#555" stroke-width="0.9"/><path d="M6.4 6.6 H14.8 V14.8 H6.4 Z" fill="#8f8f8f" stroke="#555" stroke-width="0.9"/><path d="M6.4 6.6 L8.4 8.4 H14.8 M8.4 8.4 V14.8" fill="none" stroke="#666" stroke-width="0.8"/></svg>
<span class="t" style="left:67.0px;top:462.8px;font-size:13.6px;line-height:13.6px;color:#9a9a9a;font-style:italic;transform:scaleX(0.9469);">Gearbox Layout</span>
<svg style="left:46.0px;top:461.5px" width="16" height="15" viewBox="0 0 16 15"><path d="M3 11.6 L4 8.2 L11.2 1 L14 3.8 L6.8 11 Z M4 8.2 L6.8 11" fill="#fff" stroke="#a8a8a8" stroke-width="1.1" stroke-linejoin="round"/><path d="M0.6 14 H15.4" stroke="#b8b8b8" stroke-width="1.1"/></svg>
<span class="t" style="left:86.0px;top:488.8px;font-size:13.6px;line-height:13.6px;color:#333;transform:scaleX(0.9302);">GB Plates (6)</span>
<svg style="left:65.0px;top:488.5px" width="16" height="13" viewBox="0 0 16 13"><path d="M0.8 1.9 Q0.8 0.8 1.9 0.8 H6 L7.4 2.5 H14.1 Q15.2 2.5 15.2 3.6 V11.1 Q15.2 12.2 14.1 12.2 H1.9 Q0.8 12.2 0.8 11.1 Z" fill="#fff" stroke="#555" stroke-width="1.15"/></svg>
<svg style="left:46.0px;top:489.0px" width="8" height="12" viewBox="0 0 8 12"><path d="M1.5 1.2 L6.3 6 L1.5 10.8" fill="none" stroke="#444" stroke-width="2.1"/></svg>
<span class="t" style="left:67.0px;top:514.8px;font-size:13.6px;line-height:13.6px;color:#9a9a9a;font-style:italic;transform:scaleX(0.9687);">Main Belt</span>
<svg style="left:47.0px;top:513.5px" width="14" height="15" viewBox="0 0 14 15"><g fill="#fff" stroke="#cfcfcf" stroke-width="1.1"><path d="M1.4 3.4 L8.4 12.8 M7 1.8 L13 9.6"/><circle cx="4" cy="4.2" r="3.3"/><circle cx="10.6" cy="11.6" r="2.3"/></g></svg>
<svg style="left:196.0px;top:510.5px" width="8" height="20" viewBox="0 0 8 20"><path d="M4 0.8 V19.2" stroke="#222" stroke-width="1.5" stroke-dasharray="1.6 1.7"/><circle cx="4" cy="10" r="3" fill="#222"/></svg>
<span class="t" style="left:67.0px;top:540.8px;font-size:13.6px;line-height:13.6px;color:#9a9a9a;font-style:italic;transform:scaleX(0.9742);">Inter Shaft</span>
<svg style="left:45.0px;top:539.0px" width="18" height="16" viewBox="0 0 18 16"><path d="M8.6 0.6 V6.6" stroke="#9a9a9a" stroke-width="1.4"/><path d="M5.2 1 V3 M6.8 1 V3 M10.4 1 V3 M12 1 V3" stroke="#b0b0b0" stroke-width="0.9"/><path d="M2 6.8 L15.6 5.2 L16.2 8.6 L17.6 8.8 L17.4 11.2 L16.4 11.4 L16.6 14 L3 15.6 L2.6 12.8 L0.6 12.8 L0.4 9.8 L2.2 9.6 Z" fill="#9a9a9a"/><circle cx="6" cy="10.2" r="2.3" fill="#fff"/><circle cx="12" cy="9.6" r="2.3" fill="#fff"/><circle cx="6.4" cy="10.4" r="0.9" fill="#9a9a9a"/><circle cx="12.6" cy="9.8" r="0.9" fill="#9a9a9a"/></svg>
<svg style="left:196.0px;top:536.5px" width="8" height="20" viewBox="0 0 8 20"><path d="M4 0.8 V19.2" stroke="#222" stroke-width="1.5" stroke-dasharray="1.6 1.7"/><circle cx="4" cy="10" r="3" fill="#222"/></svg>
<span class="t" style="left:67.0px;top:566.8px;font-size:13.6px;line-height:13.6px;color:#9a9a9a;font-style:italic;transform:scaleX(0.9669);">Output Shaft</span>
<svg style="left:45.0px;top:565.0px" width="18" height="16" viewBox="0 0 18 16"><path d="M8.6 0.6 V6.6" stroke="#9a9a9a" stroke-width="1.4"/><path d="M5.2 1 V3 M6.8 1 V3 M10.4 1 V3 M12 1 V3" stroke="#b0b0b0" stroke-width="0.9"/><path d="M2 6.8 L15.6 5.2 L16.2 8.6 L17.6 8.8 L17.4 11.2 L16.4 11.4 L16.6 14 L3 15.6 L2.6 12.8 L0.6 12.8 L0.4 9.8 L2.2 9.6 Z" fill="#9a9a9a"/><circle cx="6" cy="10.2" r="2.3" fill="#fff"/><circle cx="12" cy="9.6" r="2.3" fill="#fff"/><circle cx="6.4" cy="10.4" r="0.9" fill="#9a9a9a"/><circle cx="12.6" cy="9.8" r="0.9" fill="#9a9a9a"/></svg>
<svg style="left:196.0px;top:562.5px" width="8" height="20" viewBox="0 0 8 20"><path d="M4 0.8 V19.2" stroke="#222" stroke-width="1.5" stroke-dasharray="1.6 1.7"/><circle cx="4" cy="10" r="3" fill="#222"/></svg>
<span class="t" style="left:86.0px;top:592.8px;font-size:13.6px;line-height:13.6px;color:#333;transform:scaleX(0.9514);">Pocketing (4)</span>
<svg style="left:65.0px;top:592.5px" width="16" height="13" viewBox="0 0 16 13"><path d="M0.8 1.9 Q0.8 0.8 1.9 0.8 H6 L7.4 2.5 H14.1 Q15.2 2.5 15.2 3.6 V11.1 Q15.2 12.2 14.1 12.2 H1.9 Q0.8 12.2 0.8 11.1 Z" fill="#fff" stroke="#555" stroke-width="1.15"/></svg>
<svg style="left:46.0px;top:593.0px" width="8" height="12" viewBox="0 0 8 12"><path d="M1.5 1.2 L6.3 6 L1.5 10.8" fill="none" stroke="#444" stroke-width="2.1"/></svg>
<div class="abs" style="left:45px;top:621.8px;width:190px;height:6.5px;background:#ababab"></div>
<div class="abs" style="left:245px;top:538.5px;width:32.5px;height:33px;background:#fff;border:1px solid #cfcfcf;border-left:1px solid #fff"></div>
<svg style="left:252.0px;top:547.0px" width="19" height="17" viewBox="0 0 19 17"><path d="M2.4 3 V16" stroke="#444" stroke-width="1.3"/><path d="M0.4 0.8 L2.4 2.8 L4.6 0.8" fill="none" stroke="#444" stroke-width="1.2"/><path d="M5 3.4 H18.4 M5 7.4 H18.4 M5 11.4 H18.4 M5 15.4 H18.4" stroke="#444" stroke-width="1.2"/></svg>
<div class="abs" style="left:44px;top:707.5px;width:196px;height:1px;background:#d6d6d6"></div>
<svg style="left:44.0px;top:716.7px" width="12" height="8" viewBox="0 0 12 8"><path d="M1.2 1.5 L6 6.3 L10.8 1.5" fill="none" stroke="#444" stroke-width="2.1"/></svg>
<span class="t" style="left:63.3px;top:714.5px;font-size:13.6px;line-height:13.6px;color:#333;transform:scaleX(0.9496);">Parts (5)</span>
<span class="t" style="left:85.1px;top:741.0px;font-size:13.6px;line-height:13.6px;color:#9a9a9a;transform:scaleX(0.9277);">Origin Cube</span>
<svg style="left:65.0px;top:738.5px" width="15" height="15.5" viewBox="0 0 15 15.5"><path d="M7 0.7 H11.7 L14.6 3.8 V14.8 H3.4 L0.4 11.8 V7.6 L7 7.4 Z" fill="#fff" stroke="#b3b3b3" stroke-width="1.15" stroke-linejoin="round"/><path d="M0.4 7.6 L3.4 10.7 V14.8 M3.4 10.7 H10.6 V3.8 H14.6 M7 0.7 L10.6 3.8 M7 7.4 L10.6 10.7" fill="none" stroke="#bdbdbd" stroke-width="0.95"/></svg>
<span class="t" style="left:85.1px;top:767.0px;font-size:13.6px;line-height:13.6px;color:#333;transform:scaleX(0.9575);">Tube 1&quot;x1&quot;x7&quot;</span>
<svg style="left:65.0px;top:764.5px" width="15" height="15.5" viewBox="0 0 15 15.5"><path d="M7 0.7 H11.7 L14.6 3.8 V14.8 H3.4 L0.4 11.8 V7.6 L7 7.4 Z" fill="#fff" stroke="#444" stroke-width="1.15" stroke-linejoin="round"/><path d="M0.4 7.6 L3.4 10.7 V14.8 M3.4 10.7 H10.6 V3.8 H14.6 M7 0.7 L10.6 3.8 M7 7.4 L10.6 10.7" fill="none" stroke="#555" stroke-width="0.95"/></svg>
<span class="t" style="left:85.1px;top:793.0px;font-size:13.6px;line-height:13.6px;color:#333;transform:scaleX(0.9575);">Tube 1&quot;x1&quot;x7&quot;</span>
<svg style="left:65.0px;top:790.5px" width="15" height="15.5" viewBox="0 0 15 15.5"><path d="M7 0.7 H11.7 L14.6 3.8 V14.8 H3.4 L0.4 11.8 V7.6 L7 7.4 Z" fill="#fff" stroke="#444" stroke-width="1.15" stroke-linejoin="round"/><path d="M0.4 7.6 L3.4 10.7 V14.8 M3.4 10.7 H10.6 V3.8 H14.6 M7 0.7 L10.6 3.8 M7 7.4 L10.6 10.7" fill="none" stroke="#555" stroke-width="0.95"/></svg>
<span class="t" style="left:85.1px;top:819.0px;font-size:13.6px;line-height:13.6px;color:#333;transform:scaleX(0.9610);">Tube 1&quot;x1&quot;x8&quot;</span>
<svg style="left:65.0px;top:816.5px" width="15" height="15.5" viewBox="0 0 15 15.5"><path d="M7 0.7 H11.7 L14.6 3.8 V14.8 H3.4 L0.4 11.8 V7.6 L7 7.4 Z" fill="#fff" stroke="#444" stroke-width="1.15" stroke-linejoin="round"/><path d="M0.4 7.6 L3.4 10.7 V14.8 M3.4 10.7 H10.6 V3.8 H14.6 M7 0.7 L10.6 3.8 M7 7.4 L10.6 10.7" fill="none" stroke="#555" stroke-width="0.95"/></svg>
<span class="t" style="left:85.1px;top:845.0px;font-size:13.6px;line-height:13.6px;color:#222;font-weight:700;transform:scaleX(0.9581);">Part 5</span>
<svg style="left:65.0px;top:842.5px" width="15" height="15.5" viewBox="0 0 15 15.5"><path d="M7 0.7 H11.7 L14.6 3.8 V14.8 H3.4 L0.4 11.8 V7.6 L7 7.4 Z" fill="#fff" stroke="#444" stroke-width="1.15" stroke-linejoin="round"/><path d="M0.4 7.6 L3.4 10.7 V14.8 M3.4 10.7 H10.6 V3.8 H14.6 M7 0.7 L10.6 3.8 M7 7.4 L10.6 10.7" fill="none" stroke="#555" stroke-width="0.95"/></svg>
<div class="abs" style="left:322px;top:79px;width:220px;height:358px;background:#fff;box-shadow:0 0.5px 6px rgba(0,0,0,0.33);border-radius:1px"></div>
<span class="t" style="left:328.2px;top:87.1px;font-size:13.4px;line-height:13.4px;color:#222;transform:scaleX(0.9618);-webkit-text-stroke:0.45px #222;">Gusset</span>
<div class="abs" style="left:486px;top:79px;width:28px;height:27.6px;background:#168a1c"></div>
<svg style="left:491.0px;top:86.5px" width="18" height="14" viewBox="0 0 18 14"><path d="M2 7.4 L6.8 12 L16 2.4" fill="none" stroke="#fff" stroke-width="2.8"/></svg>
<svg style="left:521.6px;top:87.4px" width="13" height="13" viewBox="0 0 13 13"><path d="M1.4 1.4 L11.6 11.6 M11.6 1.4 L1.4 11.6" stroke="#c4212c" stroke-width="2.7"/></svg>
<div class="abs" style="left:322px;top:107.3px;width:220px;height:1px;background:#ddd"></div>
<span class="t" style="left:343.3px;top:114.6px;font-size:12.8px;line-height:12.8px;color:#1a4f96;font-weight:700;transform:scaleX(0.8855);">Solid</span>
<span class="t" style="left:413.9px;top:114.6px;font-size:12.8px;line-height:12.8px;color:#333;transform:scaleX(0.9091);">Surface</span>
<span class="t" style="left:497.9px;top:114.6px;font-size:12.8px;line-height:12.8px;color:#333;transform:scaleX(0.8954);">Thin</span>
<div class="abs" style="left:322px;top:132.6px;width:220px;height:1px;background:#ddd"></div>
<div class="abs" style="left:322px;top:131.6px;width:69.6px;height:2px;background:#1a4f96"></div>
<span class="t" style="left:332.6px;top:142.3px;font-size:12.8px;line-height:12.8px;color:#1a4f96;font-weight:700;transform:scaleX(0.9273);">New</span>
<span class="t" style="left:378.6px;top:142.3px;font-size:12.8px;line-height:12.8px;color:#333;transform:scaleX(0.9043);">Add</span>
<span class="t" style="left:420.4px;top:142.3px;font-size:12.8px;line-height:12.8px;color:#333;transform:scaleX(0.8939);">Remove</span>
<span class="t" style="left:484.2px;top:142.3px;font-size:12.8px;line-height:12.8px;color:#333;transform:scaleX(0.9577);">Intersect</span>
<div class="abs" style="left:322px;top:160.7px;width:220px;height:1px;background:#ddd"></div>
<div class="abs" style="left:322px;top:159.7px;width:45.6px;height:2px;background:#1a4f96"></div>
<div class="abs" style="left:325.4px;top:169.3px;width:213.3px;height:43.6px;background:#d4e9f8;border:1px solid #1a4f96;border-radius:2px"></div>
<span class="t" style="left:331.6px;top:176.2px;font-size:9.4px;line-height:9.4px;color:#444;transform:scaleX(1.0599);">Faces and sketch regions to extrude</span>
<span class="t" style="left:332.3px;top:195.0px;font-size:13.2px;line-height:13.2px;color:#3a3a3a;transform:scaleX(0.9644);">Faces of Gusset</span>
<svg style="left:518.1px;top:196.9px" width="9" height="9" viewBox="0 0 9 9"><path d="M1 1 L8 8 M8 1 L1 8" stroke="#444" stroke-width="1.1"/></svg>
<span class="t" style="left:328.2px;top:224.3px;font-size:14.2px;line-height:14.2px;color:#222;transform:scaleX(0.9758);">Blind</span>
<svg style="left:501.5px;top:228.8px" width="8" height="5" viewBox="0 0 8 5"><path d="M0.4 0.6 H7.6 L4 4.4 Z" fill="#222"/></svg>
<div class="abs" style="left:322px;top:242.8px;width:194px;height:1px;background:#cfcfcf"></div>
<svg style="left:519.5px;top:221.2px" width="19" height="19" viewBox="0 0 19 19"><path d="M18 1 L8 11" stroke="#222" stroke-width="1.9"/><path d="M0.8 18.2 L4.6 7 L12 14.4 Z" fill="#222"/><path d="M9.4 1.2 L6.2 4.4" stroke="#bdbdbd" stroke-width="1.1"/><path d="M4.2 6.6 L5.4 3 L7.8 5.4 Z" fill="#bdbdbd"/></svg>
<span class="t" style="left:327.1px;top:255.0px;font-size:13.2px;line-height:13.2px;color:#555;transform:scaleX(0.8778);">Depth</span>
<span class="t" style="left:467.0px;top:254.2px;font-size:13.6px;line-height:13.6px;color:#222;transform:scaleX(0.9364);">0.125 in</span>
<div class="abs" style="left:364.2px;top:271px;width:151.8px;height:1px;background:#d4d4d4"></div>
<svg style="left:328.5px;top:279.9px" width="7" height="12" viewBox="0 0 7 12"><path d="M1.3 1.3 L5.7 6 L1.3 10.7" fill="none" stroke="#cfcfcf" stroke-width="1.5"/></svg>
<div class="cb" style="left:346.2px;top:280.3px"></div>
<span class="t" style="left:362.1px;top:279.9px;font-size:13px;line-height:13px;color:#444;transform:scaleX(1.0098);">Direction</span>
<svg style="left:328.5px;top:307.3px" width="7" height="12" viewBox="0 0 7 12"><path d="M1.3 1.3 L5.7 6 L1.3 10.7" fill="none" stroke="#cfcfcf" stroke-width="1.5"/></svg>
<div class="cb" style="left:346.2px;top:307.7px"></div>
<span class="t" style="left:362.1px;top:307.3px;font-size:13px;line-height:13px;color:#444;transform:scaleX(1.0427);">Starting offset</span>
<div class="cb" style="left:326.5px;top:335px"></div>
<span class="t" style="left:342.2px;top:334.6px;font-size:13px;line-height:13px;color:#444;transform:scaleX(1.0392);">Symmetric</span>
<div class="cb" style="left:326.5px;top:362.3px"></div>
<span class="t" style="left:342.2px;top:361.9px;font-size:13px;line-height:13px;color:#444;transform:scaleX(1.0471);">Draft</span>
<svg style="left:328.5px;top:390.3px" width="7" height="12" viewBox="0 0 7 12"><path d="M1.3 1.3 L5.7 6 L1.3 10.7" fill="none" stroke="#cfcfcf" stroke-width="1.5"/></svg>
<div class="cb" style="left:346.2px;top:390.7px"></div>
<span class="t" style="left:362.1px;top:390.3px;font-size:13px;line-height:13px;color:#444;transform:scaleX(0.9897);">Second end position</span>
<div class="abs" style="left:328.9px;top:422.4px;width:112.1px;height:1.3px;background:#555"></div>
<div class="abs" style="left:401.2px;top:417.8px;width:10.4px;height:10.4px;background:#fff;border:1.2px solid #777;border-radius:50%"></div>
<div class="abs" style="left:467px;top:412.8px;width:48.8px;height:20.6px;background:#fff;border:1px solid #b5b5b5;border-radius:3px"></div>
<span class="t" style="left:478.7px;top:417.3px;font-size:12.6px;line-height:12.6px;color:#222;transform:scaleX(0.9415);">Final</span>
<svg style="left:525.0px;top:419.6px" width="12" height="12" viewBox="0 0 12 12"><circle cx="6" cy="6" r="5.6" fill="#9a9a9a"/><text x="6" y="9.3" font-size="9" font-weight="700" fill="#fff" text-anchor="middle" font-family="Liberation Sans, sans-serif">?</text></svg>
<div class="abs" style="left:40px;top:1050px;width:1879px;height:29px;background:#d9d9d9"></div>
<svg style="left:0;top:1050px" width="700" height="29" viewBox="0 1050 700 29"><rect x="40" y="1050" width="34.3" height="29" fill="#d3d3d3"/><path d="M74.3 1050.8 H108.3 L117 1064.2 L108.3 1077.6 H74.3 Z" fill="#e7e7e7"/><path d="M109 1050.8 H225.3 L233.9 1064.2 L225.3 1077.6 H109 L117.7 1064.2 Z" fill="#ffffff"/><path d="M108.6 1050.8 L117.3 1064.2 L108.6 1077.6" fill="none" stroke="#d0d0d0" stroke-width="0.8"/><path d="M225.6 1050.8 L234.3 1064.2 L225.6 1077.6" fill="none" stroke="#cfcfcf" stroke-width="0.8"/><path d="M236.4 1050.8 H437 V1079 H236.4 Z" fill="#e1e1e1"/><path d="M236.4 1050.8 L226 1050.8 L234.6 1064.2 L226 1077.6 L236.4 1077.6 Z" fill="#d9d9d9"/><rect x="438.9" y="1050" width="198.8" height="29" fill="#fcfcfc"/><rect x="438.9" y="1077" width="198.8" height="2" fill="#1a4f96"/></svg>
<svg style="left:49.0px;top:1056.3px" width="15" height="15" viewBox="0 0 15 15"><path d="M7.5 0.6 V14.4 M0.6 7.5 H14.4" stroke="#333" stroke-width="2.2"/></svg>
<svg style="left:81.5px;top:1053.6px" width="20" height="18" viewBox="0 0 20 18"><path d="M10 0.6 L19.6 9 H17 V17.4 H12 V11.6 H8 V17.4 H3 V9 H0.4 Z M14.4 1.2 H16.8 V5.4 L14.4 3.2 Z" fill="#4a4a4a"/></svg>
<svg style="left:125.0px;top:1055.0px" width="19" height="15" viewBox="0 0 19 15"><path d="M1 2.2 Q1 1 2.2 1 H7.2 L8.8 3 H16.8 Q18 3 18 4.2 V12.8 Q18 14 16.8 14 H2.2 Q1 14 1 12.8 Z" fill="#fff" stroke="#555" stroke-width="1.2"/></svg>
<span class="t" style="left:150.3px;top:1056.4px;font-size:14.2px;line-height:14.2px;color:#666;transform:scaleX(0.9527);">Exercise 3</span>
<svg style="left:248.9px;top:1056.2px" width="13" height="13" viewBox="0 0 13 13"><circle cx="6.5" cy="6.5" r="6.2" fill="#5f98d8"/><circle cx="6.5" cy="3.6" r="1.3" fill="#e8f1fb"/><path d="M5.2 5.8 H7.6 V10.4 H5.2 Z" fill="#e8f1fb"/></svg>
<svg style="left:267.0px;top:1054.5px" width="18" height="17" viewBox="0 0 18 17"><path d="M1 3.4 L4 1 H14.6 L17 3.6 V16 H4 L1 13.4 Z" fill="#fff" stroke="#444" stroke-width="1.1" stroke-linejoin="round"/><path d="M1 3.4 L4 5.8 V16 M4 5.8 H17" fill="none" stroke="#444" stroke-width="0.9"/><path d="M5.4 4 L7.4 2.6 H13.4 L15 4 V12.6 H7.2 L5.4 11 Z" fill="#8a8a8a" stroke="#444" stroke-width="0.9"/></svg>
<span class="t" style="left:289.3px;top:1057.1px;font-size:14.2px;line-height:14.2px;color:#5a5a5a;transform:scaleX(0.9726);">Exercise 3 Assembly</span>
<svg style="left:449.4px;top:1054.5px" width="18" height="17" viewBox="0 0 18 17"><path d="M1 5 L3 3.6 H7 V16 H1 Z" fill="#fff" stroke="#222" stroke-width="1.2" stroke-linejoin="round"/><path d="M7.4 3 L9.6 1 H15 Q17 1 17 3 V16 H7.4 Z" fill="#fff" stroke="#222" stroke-width="1.2" stroke-linejoin="round"/><path d="M9.6 1.2 V4 Q9.6 5 11 5 H17 M5 3.8 V16" fill="none" stroke="#222" stroke-width="1"/></svg>
<span class="t" style="left:471.4px;top:1057.1px;font-size:14.2px;line-height:14.2px;color:#222;transform:scaleX(0.9610);">Exercise 3 Part Studio</span>
</div></body></html>
